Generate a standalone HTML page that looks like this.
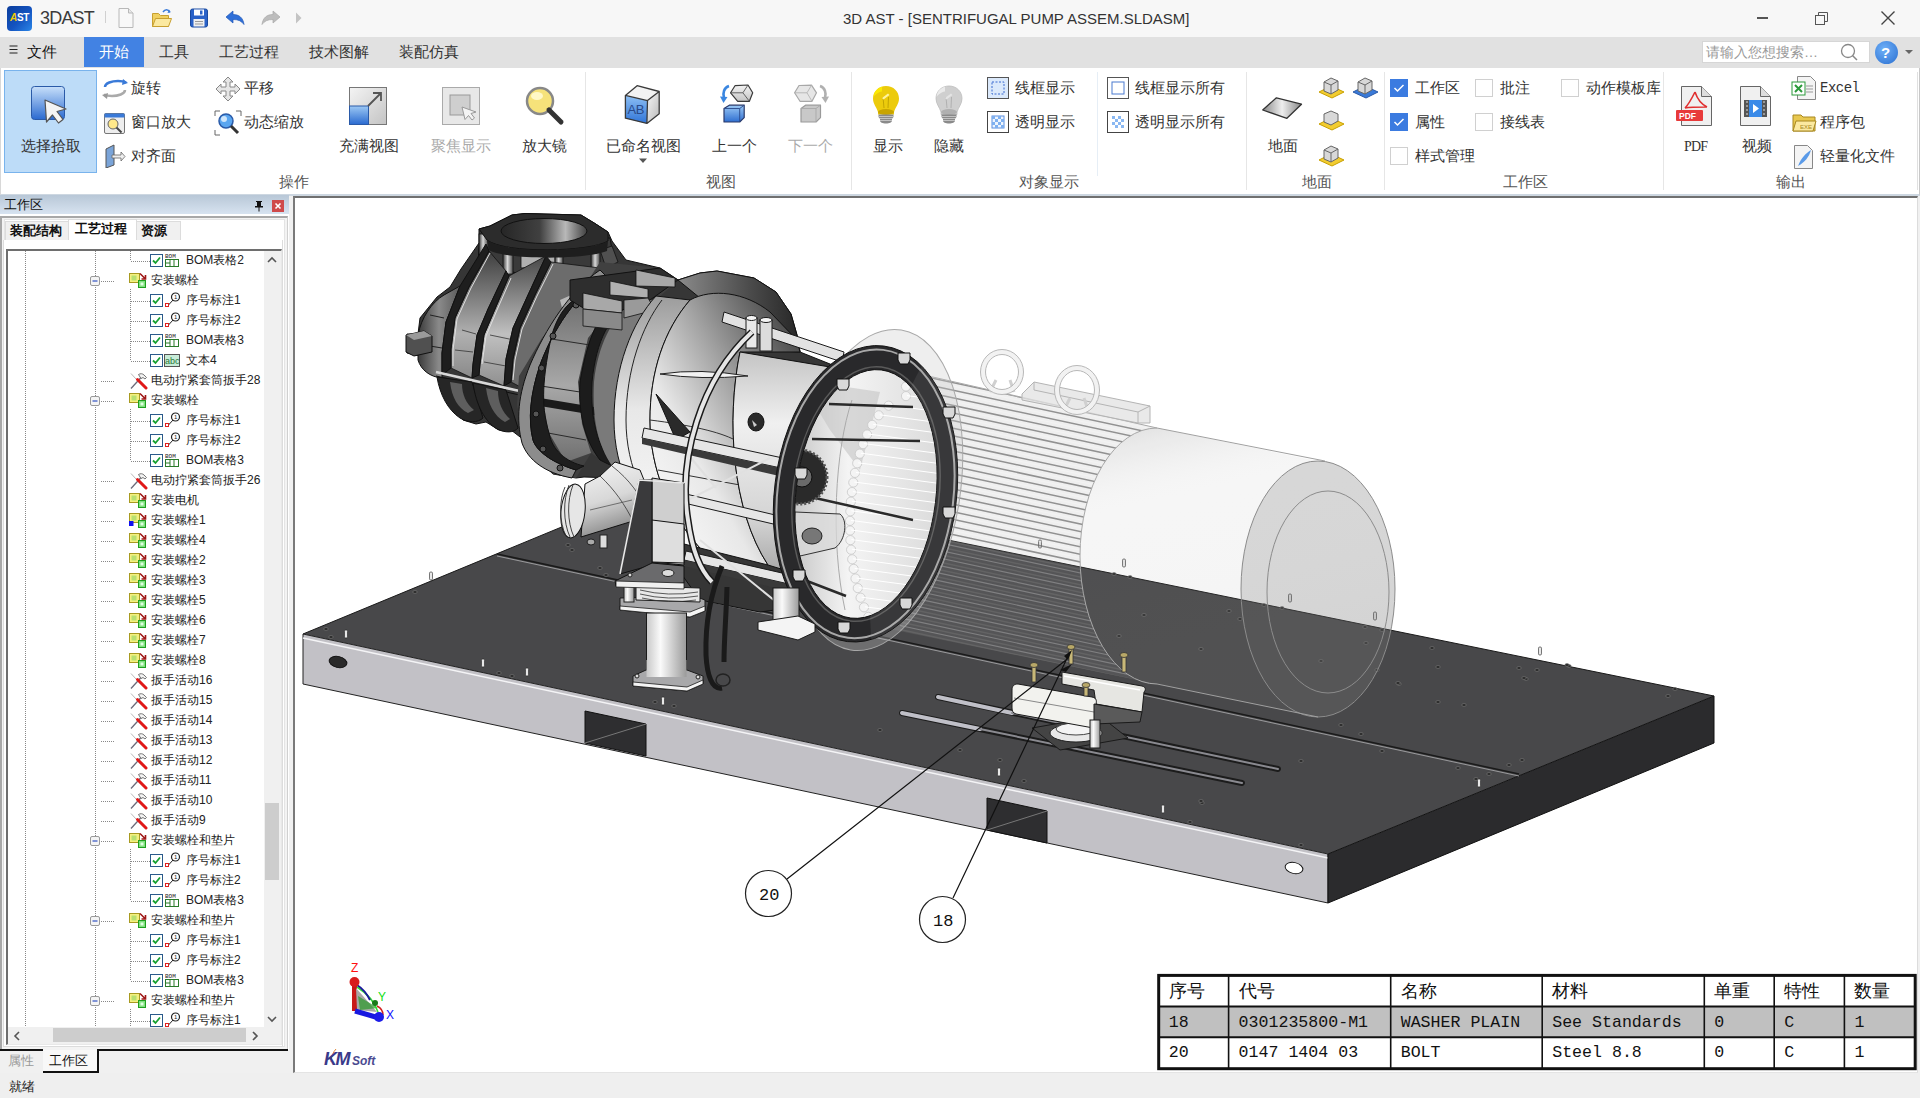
<!DOCTYPE html>
<html><head><meta charset="utf-8">
<style>
*{box-sizing:border-box;margin:0;padding:0}
html,body{width:1920px;height:1098px;overflow:hidden;background:#f0f0f0;font-family:"Liberation Sans",sans-serif;color:#222}
.a{position:absolute;white-space:nowrap}
#title{left:0;top:0;width:1920px;height:37px;background:#f7f7f7}
#menu{left:0;top:37px;width:1920px;height:31px;background:#e1e1e1}
#ribbon{left:0;top:68px;width:1920px;height:128px;background:#fff;border-left:1px solid #d8d8d8;border-right:1px solid #c8c8c8;border-bottom:2px solid #cdd7e1}
.mt{font-size:15px;color:#333;top:43px;line-height:18px}
.rt{font-size:14.5px;color:#333;line-height:16px}
.gl{font-size:14.5px;color:#555;line-height:16px;top:174px}
.sep{width:1px;background:#e6e6e6;top:72px;height:118px}
.gray{color:#aaa}
#panel{left:0;top:195px;width:289px;height:878px;background:#fff}
#status{left:0;top:1073px;width:1920px;height:25px;background:#efefef}
#vp{left:293px;top:196px;width:1625px;height:877px;background:#fff;border-left:2px solid #7a7a7a;border-top:2px solid #707070;border-right:1px solid #dcdcdc;border-bottom:1px solid #e4e4e4}
.tr{font-size:12px;line-height:14px;color:#222}
</style></head>
<body>
<!-- TITLE BAR -->
<div id="title" class="a">
<div class="a" style="left:7px;top:6px;width:25px;height:25px;border-radius:4px;background:linear-gradient(135deg,#0b3d9c 0%,#1454c0 55%,#2a86e8 100%)"></div>
<span class="a" style="left:10px;top:12px;font-size:10px;font-weight:bold;color:#f5d000;letter-spacing:-0.5px;font-style:italic">A</span><span class="a" style="left:17px;top:12px;font-size:10px;font-weight:bold;color:#fff;letter-spacing:-0.5px">ST</span>
<span class="a" style="left:40px;top:7px;font-size:18px;line-height:22px;color:#3a3a3a;letter-spacing:-0.8px">3DAST</span>
<div class="a" style="left:105px;top:11px;width:1px;height:12px;background:#d0d0d0"></div>
<svg class="a" style="left:114px;top:6px" width="24" height="24" viewBox="0 0 24 24"><path d="M5 2.5h9.5l4.5 4.5v14.5h-14z" fill="#f8f8f8" stroke="#b8b8b8"/><path d="M14.5 2.5v4.5h4.5" fill="#e8e8e8" stroke="#b8b8b8"/></svg>
<svg class="a" style="left:150px;top:6px" width="24" height="24" viewBox="0 0 24 24"><path d="M2.5 7.5h6l2 2h8v11h-16z" fill="#f0d060" stroke="#c8a030"/><path d="M2.5 20.5l3-8h16l-3 8z" fill="#fbe9a0" stroke="#c8a030"/><path d="M13 6c2-3 5-3 7 0" fill="none" stroke="#3a7ad8" stroke-width="1.5"/><path d="M19 3.5l1.5 3-3 .5z" fill="#3a7ad8"/></svg>
<svg class="a" style="left:187px;top:6px" width="24" height="24" viewBox="0 0 24 24"><rect x="3.5" y="3" width="17" height="18" rx="2" fill="#2a62c8" stroke="#1a4aa0"/><rect x="7" y="3.5" width="10" height="6" fill="#fff"/><rect x="13" y="4.5" width="2.5" height="4" fill="#2a62c8"/><rect x="6.5" y="13" width="11" height="7.5" fill="#f0f0f0"/><path d="M8 15.5h8M8 18h8" stroke="#999"/></svg>
<svg class="a" style="left:223px;top:6px" width="24" height="24" viewBox="0 0 24 24"><path d="M3 11l7-6v3.5c6 0 10 3 11 10-2.5-3.5-5.5-5-11-5v3.5z" fill="#2f6fd8" stroke="#1f58b8" stroke-width="0.7"/></svg>
<svg class="a" style="left:259px;top:6px" width="24" height="24" viewBox="0 0 24 24"><path d="M21 11l-7-6v3.5c-6 0-10 3-11 10 2.5-3.5 5.5-5 11-5v3.5z" fill="#bdbdbd" stroke="#a8a8a8" stroke-width="0.7"/></svg>
<svg class="a" style="left:293px;top:10px" width="12" height="16" viewBox="0 0 12 16"><path d="M3 2.5l5.5 5.5-5.5 5.5z" fill="#c4c4c4"/></svg>
<span class="a" style="left:843px;top:10px;font-size:15px;line-height:18px;color:#333">3D AST - [SENTRIFUGAL PUMP ASSEM.SLDASM]</span>
<div class="a" style="left:1757px;top:17px;width:11px;height:1.5px;background:#555"></div>
<svg class="a" style="left:1813px;top:9px" width="18" height="18" viewBox="0 0 18 18"><rect x="2.5" y="6.5" width="9" height="9" fill="none" stroke="#555"/><path d="M5.5 6.5v-3h9v9h-3" fill="none" stroke="#555"/></svg>
<svg class="a" style="left:1879px;top:9px" width="18" height="18" viewBox="0 0 18 18"><path d="M2.5 2.5l13 13M15.5 2.5l-13 13" stroke="#444" stroke-width="1.4"/></svg>
</div>
<!-- MENU -->
<div id="menu" class="a">
<svg class="a" style="left:9px;top:8px" width="10" height="10" viewBox="0 0 10 10"><path d="M0.5 1h8M0.5 4.5h8M0.5 8h8" stroke="#222" stroke-width="1.1"/></svg>
<span class="a mt" style="left:27px;top:6px;color:#111">文件</span>
<div class="a" style="left:84px;top:0;width:60px;height:30px;background:#4282e3"></div>
<span class="a mt" style="left:99px;top:6px;color:#fff">开始</span>
<span class="a mt" style="left:159px;top:6px">工具</span>
<span class="a mt" style="left:219px;top:6px">工艺过程</span>
<span class="a mt" style="left:309px;top:6px">技术图解</span>
<span class="a mt" style="left:399px;top:6px">装配仿真</span>
<div class="a" style="left:1702px;top:4px;width:168px;height:22px;background:#fff;border:1px solid #d6d6d6"></div>
<span class="a" style="left:1706px;top:7px;font-size:14px;line-height:16px;color:#999">请输入您想搜索…</span>
<svg class="a" style="left:1838px;top:5px" width="22" height="20" viewBox="0 0 22 20"><circle cx="10" cy="9" r="6.5" fill="none" stroke="#888" stroke-width="1.3"/><path d="M14.5 13.5l4.5 4.5" stroke="#888" stroke-width="1.5"/></svg>
<div class="a" style="left:1875px;top:4px;width:23px;height:23px;border-radius:50%;background:radial-gradient(circle at 40% 35%,#6fb0f8,#2a6fd0)"></div>
<span class="a" style="left:1881px;top:7px;font-size:15px;line-height:17px;color:#fff;font-weight:bold">?</span>
<svg class="a" style="left:1904px;top:11px" width="10" height="8" viewBox="0 0 10 8"><path d="M1 2h8l-4 4z" fill="#666"/></svg>
</div>
<!-- RIBBON -->
<div id="ribbon" class="a">
<!-- group 操作 -->
<div class="a" style="left:3px;top:2px;width:93px;height:103px;background:#bddcf8;border:1px solid #79b3ec"></div>
<svg class="a" style="left:28px;top:16px" width="44" height="44" viewBox="0 0 44 44"><defs><linearGradient id="gs" x1="0" y1="0" x2="0" y2="1"><stop offset="0" stop-color="#c8e0fa"/><stop offset="1" stop-color="#2a6ad0"/></linearGradient></defs><rect x="2.5" y="2.5" width="33" height="33" rx="3" fill="url(#gs)" stroke="#2a5aa8"/><path d="M16 16l21 9-9 2.5 6 8-4.5 3.5-6-8-6 7z" fill="#f4f4f4" stroke="#555" stroke-width="1.2" stroke-linejoin="round"/></svg>
<span class="a rt" style="left:20px;top:70px">选择拾取</span>
<svg class="a" style="left:100px;top:10px" width="28" height="22" viewBox="0 0 28 22"><path d="M4 9c0-4 7-6 13-6 3 0 6 .5 8 1.5" fill="none" stroke="#3a7ad8" stroke-width="2.5"/><path d="M24 12c0 4-7 6-13 6-3 0-6-.5-8-1.5" fill="none" stroke="#aaa" stroke-width="2.5"/><path d="M22 1l5 4-6 2z" fill="#3a7ad8"/><path d="M6 21l-5-4 6-2z" fill="#999"/></svg>
<span class="a rt" style="left:130px;top:12px">旋转</span>
<svg class="a" style="left:102px;top:44px" width="24" height="24" viewBox="0 0 24 24"><rect x="1.5" y="1.5" width="20" height="20" rx="1.5" fill="#eee" stroke="#777"/><rect x="1.5" y="1.5" width="20" height="4" fill="#3a7ad8"/><circle cx="10" cy="12" r="5" fill="#ffe88a" stroke="#666"/><path d="M13.5 15.5l5 5" stroke="#444" stroke-width="2"/></svg>
<span class="a rt" style="left:130px;top:46px">窗口放大</span>
<svg class="a" style="left:102px;top:76px" width="24" height="24" viewBox="0 0 24 24"><path d="M3 5l8-4v20l-8 3z" fill="#7aa4d8" stroke="#555"/><path d="M9 11h9v-3l4 4.5-4 4.5v-3h-9z" fill="#eee" stroke="#666" stroke-width="0.8"/></svg>
<span class="a rt" style="left:130px;top:80px">对齐面</span>
<svg class="a" style="left:213px;top:8px" width="28" height="26" viewBox="0 0 28 26"><path d="M14 1l5 5h-3v5h5v-3l5 5-5 5v-3h-5v5h3l-5 5-5-5h3v-5h-5v3l-5-5 5-5v3h5v-5h-3z" fill="#e6e6e6" stroke="#888"/></svg>
<span class="a rt" style="left:243px;top:12px">平移</span>
<svg class="a" style="left:213px;top:42px" width="28" height="26" viewBox="0 0 28 26"><path d="M1 6v-5h5M22 1h5v5M1 20v5h5" fill="none" stroke="#666"/><circle cx="12" cy="11" r="7" fill="#5aa6f0" stroke="#2a5aa8" stroke-width="1.5"/><circle cx="10" cy="9" r="3" fill="#cfe6fb"/><path d="M17 16l7 7" stroke="#333" stroke-width="3"/></svg>
<span class="a rt" style="left:243px;top:46px">动态缩放</span>
<svg class="a" style="left:346px;top:17px" width="42" height="42" viewBox="0 0 42 42"><defs><linearGradient id="gf" x1="0" y1="0" x2="1" y2="1"><stop offset="0" stop-color="#f4f4f4"/><stop offset="1" stop-color="#c4c4c4"/></linearGradient><linearGradient id="gb" x1="0" y1="0" x2="0" y2="1"><stop offset="0" stop-color="#9cc8f4"/><stop offset="1" stop-color="#2a6ad0"/></linearGradient></defs><rect x="2.5" y="2.5" width="37" height="37" fill="url(#gf)" stroke="#777"/><rect x="2.5" y="21" width="19" height="18.5" fill="url(#gb)" stroke="#2a5aa8"/><path d="M21 21l13-13M26 8h8v8" fill="none" stroke="#555" stroke-width="1.8"/></svg>
<span class="a rt" style="left:338px;top:70px">充满视图</span>
<svg class="a" style="left:439px;top:17px" width="42" height="42" viewBox="0 0 42 42"><rect x="2.5" y="2.5" width="37" height="37" fill="#e8e8e8" stroke="#aaa"/><rect x="10" y="10" width="20" height="20" fill="#cfcfcf" stroke="#999"/><path d="M22 22l14 5-5 1.5 3.5 4.5-2.5 2-3.5-4.5-3.5 4z" fill="#f4f4f4" stroke="#999"/></svg>
<span class="a rt gray" style="left:430px;top:70px">聚焦显示</span>
<svg class="a" style="left:522px;top:16px" width="44" height="44" viewBox="0 0 44 44"><circle cx="17" cy="17" r="13" fill="#f6e27a" stroke="#888" stroke-width="2.5"/><ellipse cx="14" cy="12" rx="6" ry="4" fill="#fff8c8"/><path d="M26 26l12 12" stroke="#333" stroke-width="5" stroke-linecap="round"/></svg>
<span class="a rt" style="left:521px;top:70px">放大镜</span>
<span class="a gl" style="left:278px;top:106px">操作</span>
<div class="a sep" style="left:584px;top:4px"></div>
<!-- group 视图 -->
<svg class="a" style="left:622px;top:14px" width="42" height="46" viewBox="0 0 42 46"><defs><linearGradient id="cbF" x1="0" y1="0" x2="0" y2="1"><stop offset="0" stop-color="#8ec0f4"/><stop offset="1" stop-color="#2f74d8"/></linearGradient><linearGradient id="cbR" x1="0" y1="0" x2="1" y2="1"><stop offset="0" stop-color="#f8f8f8"/><stop offset="1" stop-color="#b8b8b8"/></linearGradient></defs><path d="M2.4 13.4L24.5 18.6L23.9 41.4L2.4 36.2Z" fill="url(#cbF)"/><path d="M2.4 13.4L14.1 3.7L36.2 9.5L24.5 18.6Z" fill="#f2f2f2"/><path d="M24.5 18.6L36.2 9.5L36.2 31.7L23.9 41.4Z" fill="url(#cbR)"/><path d="M2.4 13.4L14.1 3.7L36.2 9.5L36.2 31.7L23.9 41.4L2.4 36.2Z M2.4 13.4L24.5 18.6L36.2 9.5M24.5 18.6L23.9 41.4" fill="none" stroke="#3a3a3a" stroke-width="1.3" stroke-linejoin="round"/><text x="4.5" y="32" font-size="13" fill="#2a4a8a" font-family="Liberation Sans" letter-spacing="-0.5">AB</text></svg>
<span class="a rt" style="left:605px;top:70px">已命名视图</span>
<svg class="a" style="left:637px;top:90px" width="10" height="6" viewBox="0 0 10 6"><path d="M1 0.5h8l-4 4.5z" fill="#555"/></svg>
<svg class="a" style="left:716px;top:14px" width="40" height="46" viewBox="0 0 40 46"><defs><linearGradient id="pvB" x1="0" y1="0" x2="0" y2="1"><stop offset="0" stop-color="#9ccaf6"/><stop offset="1" stop-color="#2f6ed0"/></linearGradient><linearGradient id="pvG" x1="0" y1="0" x2="0" y2="1"><stop offset="0" stop-color="#f4f4f4"/><stop offset="1" stop-color="#c4c4c4"/></linearGradient></defs><path d="M13.6 10.8L18 3.7L31 3L35.7 10.8L32.4 19.3L20.7 19.3Z" fill="url(#pvG)" stroke="#3a3a3a" stroke-width="1.2" stroke-linejoin="round"/><path d="M13.6 10.8L25.9 10.8L31 3M25.9 10.8L32.4 19.3" fill="none" stroke="#555" stroke-width="0.9"/><path d="M7 26.5L12.3 23.2L27.2 23.2L27.2 35.6L22.7 40L7 40Z" fill="url(#pvB)" stroke="#2a3a6a" stroke-width="1.2" stroke-linejoin="round"/><path d="M7 26.5L22.7 26.5L27.2 23.2M22.7 26.5L22.7 40" fill="none" stroke="#2a4a8a" stroke-width="0.9"/><path d="M12 4C7 5.5 5.5 11 7 16" fill="none" stroke="#3a86e0" stroke-width="2.6"/><path d="M3 14.5L10.5 15L6.5 21Z" fill="#3a86e0"/></svg>
<span class="a rt" style="left:711px;top:70px">上一个</span>
<svg class="a" style="left:792px;top:14px" width="40" height="46" viewBox="0 0 40 46"><path d="M1.6 10.8L6 3.5L18.5 3.2L23.5 10.8L19 19.3L7 19.3Z" fill="#e6e6e6" stroke="#a8a8a8" stroke-width="1.2" stroke-linejoin="round"/><path d="M1.6 10.8L14 10.8L18.5 3.2M14 10.8L19 19.3" fill="none" stroke="#b4b4b4" stroke-width="0.9"/><path d="M8 26.5L12.5 23.2L27.5 23.2L27.5 35.6L23 40L8 40Z" fill="#c8c8c8" stroke="#9a9a9a" stroke-width="1.2" stroke-linejoin="round"/><path d="M8 26.5L23 26.5L27.5 23.2M23 26.5L23 40" fill="none" stroke="#a8a8a8" stroke-width="0.9"/><path d="M27 4C32 5.5 33.5 11 32 16" fill="none" stroke="#b0b0b0" stroke-width="2.6"/><path d="M36 14.5L28.5 15L32.5 21Z" fill="#b0b0b0"/></svg>
<span class="a rt gray" style="left:787px;top:70px">下一个</span>
<span class="a gl" style="left:705px;top:106px">视图</span>
<div class="a sep" style="left:850px;top:4px"></div>
<!-- group 对象显示 -->
<svg class="a" style="left:868px;top:14px" width="34" height="46" viewBox="0 0 34 46"><path d="M17 4C24.5 4 30 9.5 30 16.5C30 22 26.5 25 25 30L25 32.5L9 32.5L9 30C7.5 25 4 22 4 16.5C4 9.5 9.5 4 17 4Z" fill="#eccb0c"/><path d="M17 4C11 4 5 8 4.5 15C6 13 9 10 13 9.5L13 4.8C14.5 4.2 15.8 4 17 4Z" fill="#fff000" fill-opacity="0.8"/><path d="M15 26L14 15M19 26L19.5 15" stroke="#b89a00" stroke-width="0.8"/><path d="M13 16L19 11.5L20.5 13L14.5 17.5Z" fill="#fff3a0"/><ellipse cx="17" cy="30" rx="8" ry="3" fill="#c8a400"/><path d="M9.5 32.5h15v2c0 1-1 1.5-1.5 2v2c0 2-2.5 3-6 3s-6-1-6-3v-2c-0.5-.5-1.5-1-1.5-2z" fill="#8a8a8a"/><path d="M10 34.5h14M10.5 36.5h13M11 38.5h12" stroke="#c8c8c8" stroke-width="0.9"/></svg>
<span class="a rt" style="left:872px;top:70px">显示</span>
<svg class="a" style="left:931px;top:14px" width="34" height="46" viewBox="0 0 34 46"><path d="M17 4C24.5 4 30 9.5 30 16.5C30 22 26.5 25 25 30L25 32.5L9 32.5L9 30C7.5 25 4 22 4 16.5C4 9.5 9.5 4 17 4Z" fill="#cfcfcf" stroke="#bdbdbd" stroke-width="0.8"/><path d="M17 4C11 4 5 8 4.5 15C6 13 9 10 13 9.5L13 4.8C14.5 4.2 15.8 4 17 4Z" fill="#f0f0f0" fill-opacity="0.8"/><path d="M15 26L14 15M19 26L19.5 15" stroke="#a8a8a8" stroke-width="0.8"/><path d="M13 16L19 11.5L20.5 13L14.5 17.5Z" fill="#e4e4e4"/><ellipse cx="17" cy="30" rx="8" ry="3" fill="#b0b0b0"/><path d="M9.5 32.5h15v2c0 1-1 1.5-1.5 2v2c0 2-2.5 3-6 3s-6-1-6-3v-2c-0.5-.5-1.5-1-1.5-2z" fill="#8a8a8a"/><path d="M10 34.5h14M10.5 36.5h13M11 38.5h12" stroke="#c8c8c8" stroke-width="0.9"/></svg>
<span class="a rt" style="left:933px;top:70px">隐藏</span>
<svg class="a" style="left:985px;top:8px" width="24" height="24" viewBox="0 0 24 24"><rect x="1.5" y="1.5" width="21" height="21" fill="#dbe9fb" stroke="#555"/><rect x="6" y="6" width="12" height="12" fill="none" stroke="#3a6ad0" stroke-dasharray="2 1.5"/></svg>
<span class="a rt" style="left:1014px;top:12px">线框显示</span>
<svg class="a" style="left:985px;top:42px" width="24" height="24" viewBox="0 0 24 24"><rect x="1.5" y="1.5" width="21" height="21" fill="#fff" stroke="#444"/><rect x="6" y="6" width="12" height="12" fill="#eef5fe" stroke="#5a8ee0"/><path d="M6 6h3v3h-3zM12 6h3v3h-3zM9 9h3v3h-3zM15 9h3v3h-3zM6 12h3v3h-3zM12 12h3v3h-3zM9 15h3v3h-3zM15 15h3v3h-3z" fill="#7eb0f0"/></svg>
<span class="a rt" style="left:1014px;top:46px">透明显示</span>
<div class="a sep" style="left:1096px;top:4px;height:104px;background:#e6eef6"></div>
<svg class="a" style="left:1105px;top:8px" width="24" height="24" viewBox="0 0 24 24"><rect x="1.5" y="1.5" width="21" height="21" fill="#fff" stroke="#555"/><rect x="6" y="6" width="12" height="12" fill="none" stroke="#4a7ad0"/></svg>
<span class="a rt" style="left:1134px;top:12px">线框显示所有</span>
<svg class="a" style="left:1105px;top:42px" width="24" height="24" viewBox="0 0 24 24"><rect x="1.5" y="1.5" width="21" height="21" fill="#fff" stroke="#444"/><path d="M6 6h3v3h-3zM12 6h3v3h-3zM9 9h3v3h-3zM15 9h3v3h-3zM6 12h3v3h-3zM12 12h3v3h-3zM9 15h3v3h-3zM15 15h3v3h-3z" fill="#8ab8f2"/></svg>
<span class="a rt" style="left:1134px;top:46px">透明显示所有</span>
<span class="a gl" style="left:1018px;top:106px">对象显示</span>
<div class="a sep" style="left:1245px;top:4px"></div>
<!-- group 地面 -->
<svg class="a" style="left:1260px;top:26px" width="44" height="26" viewBox="0 0 44 26"><defs><linearGradient id="gp" x1="0" y1="0" x2="1" y2="0"><stop offset="0" stop-color="#888"/><stop offset="0.5" stop-color="#eee"/><stop offset="1" stop-color="#888"/></linearGradient></defs><path d="M1.7 16L15.4 3.8L40.5 10.2L25.9 24.3Z" fill="url(#gp)" stroke="#333" stroke-width="1.3" stroke-linejoin="round"/></svg>
<span class="a rt" style="left:1267px;top:70px">地面</span>
<svg class="a" style="left:1316px;top:8px" width="28" height="24" viewBox="0 0 28 24"><path d="M2 16l12-6 13 6-12 6z" fill="#f2cc30" stroke="#c8a000"/><path d="M7 6l7-4 7 3v9l-7 4-7-3z" fill="#d8d8d8" stroke="#666"/><path d="M7 6l7 3 7-4M14 9v9" fill="none" stroke="#666"/></svg>
<svg class="a" style="left:1350px;top:8px" width="28" height="24" viewBox="0 0 28 24"><path d="M2 16l12-6 13 6-12 6z" fill="#3a7ad8" stroke="#2a5aa8"/><path d="M7 6l7-4 7 3v9l-7 4-7-3z" fill="#d8d8d8" stroke="#666"/><path d="M7 6l7 3 7-4M14 9v9" fill="none" stroke="#666"/></svg>
<svg class="a" style="left:1316px;top:42px" width="28" height="24" viewBox="0 0 28 24"><path d="M2 14l12-6 13 6-12 6z" fill="#f2cc30" stroke="#c8a000"/><path d="M7 4l7-3 7 3v7l-7 4-7-3z" fill="#d8d8d8" stroke="#666"/></svg>
<svg class="a" style="left:1316px;top:76px" width="28" height="24" viewBox="0 0 28 24"><path d="M2 16l12-6 13 6-12 6z" fill="#f2cc30" stroke="#c8a000"/><path d="M7 6l7-4 7 3v9l-7 4-7-3z" fill="#d8d8d8" stroke="#666"/><path d="M7 6l7 3 7-4M14 9v9" fill="none" stroke="#666"/></svg>
<span class="a gl" style="left:1301px;top:106px">地面</span>
<div class="a sep" style="left:1383px;top:4px"></div>
<!-- group 工作区 -->
<div class="a" style="left:1389px;top:11px;width:18px;height:18px;background:#3b7be0"></div><svg class="a" style="left:1389px;top:11px" width="18" height="18" viewBox="0 0 18 18"><path d="M4.5 9l3 3 6-6" fill="none" stroke="#fff" stroke-width="1.5"/></svg>
<span class="a rt" style="left:1414px;top:12px">工作区</span>
<div class="a" style="left:1474px;top:11px;width:18px;height:18px;border:1px solid #d0d0d0;background:#fff"></div>
<span class="a rt" style="left:1499px;top:12px">批注</span>
<div class="a" style="left:1560px;top:11px;width:18px;height:18px;border:1px solid #d0d0d0;background:#fff"></div>
<span class="a rt" style="left:1585px;top:12px">动作模板库</span>
<div class="a" style="left:1389px;top:45px;width:18px;height:18px;background:#3b7be0"></div><svg class="a" style="left:1389px;top:45px" width="18" height="18" viewBox="0 0 18 18"><path d="M4.5 9l3 3 6-6" fill="none" stroke="#fff" stroke-width="1.5"/></svg>
<span class="a rt" style="left:1414px;top:46px">属性</span>
<div class="a" style="left:1474px;top:45px;width:18px;height:18px;border:1px solid #d0d0d0;background:#fff"></div>
<span class="a rt" style="left:1499px;top:46px">接线表</span>
<div class="a" style="left:1389px;top:79px;width:18px;height:18px;border:1px solid #d0d0d0;background:#fff"></div>
<span class="a rt" style="left:1414px;top:80px">样式管理</span>
<span class="a gl" style="left:1502px;top:106px">工作区</span>
<div class="a sep" style="left:1662px;top:4px"></div>
<!-- group 输出 -->
<svg class="a" style="left:1674px;top:16px" width="40" height="44" viewBox="0 0 40 44"><path d="M6.5 2.5h20l10 10v29h-30z" fill="#f0f0f0" stroke="#666"/><path d="M26.5 2.5v10h10" fill="#ddd" stroke="#666"/><path d="M20 8c-3 6-6 12-10 16M20 8c2 6 6 12 12 15M10 24c5-1 15-1 22-1" fill="none" stroke="#e03030" stroke-width="1.6"/><rect x="1" y="26" width="27" height="11" rx="1" fill="#e83a3a"/><text x="4" y="35" font-size="8.5" fill="#fff" font-family="Liberation Sans" font-weight="bold">PDF</text></svg>
<span class="a" style="left:1683px;top:71px;font-family:'Liberation Serif',serif;font-size:14px;line-height:16px;color:#333;letter-spacing:-0.8px">PDF</span>
<svg class="a" style="left:1736px;top:16px" width="40" height="44" viewBox="0 0 40 44"><path d="M3.5 2.5h20l10 10v29h-30z" fill="#f0f0f0" stroke="#666"/><path d="M23.5 2.5v10h10" fill="#ddd" stroke="#666"/><rect x="7" y="16" width="23" height="17" fill="#555"/><path d="M9 18h2M9 22h2M9 26h2M9 30h2M26 18h2M26 22h2M26 26h2M26 30h2" stroke="#ddd"/><rect x="12" y="16" width="13" height="17" fill="#3a8ae8"/><path d="M16 20l6 4.5-6 4.5z" fill="#fff"/></svg>
<span class="a rt" style="left:1741px;top:70px">视频</span>
<svg class="a" style="left:1790px;top:7px" width="26" height="26" viewBox="0 0 26 26"><path d="M6.5 1.5h13l5 5v18h-18z" fill="#f4f4f4" stroke="#888"/><rect x="1" y="7" width="13" height="13" fill="#fff" stroke="#2a9a3a"/><path d="M4 10l7 7M11 10l-7 7" stroke="#2a9a3a" stroke-width="2"/><path d="M15 11h7M15 14h7M15 17h7" stroke="#999"/></svg>
<span class="a" style="left:1819px;top:12px;font-family:'Liberation Mono',monospace;font-size:14px;line-height:16px;color:#333;letter-spacing:-0.5px">Excel</span>
<svg class="a" style="left:1790px;top:42px" width="26" height="24" viewBox="0 0 26 24"><path d="M2 5h8l2 2h12v14h-22z" fill="#e8c850" stroke="#a88820"/><path d="M2 21l3-10h20l-3 10z" fill="#fbe9a0" stroke="#a88820"/><text x="9" y="19" font-size="6" fill="#a88820" font-family="Liberation Sans">EXE</text></svg>
<span class="a rt" style="left:1819px;top:46px">程序包</span>
<svg class="a" style="left:1790px;top:76px" width="26" height="26" viewBox="0 0 26 26"><path d="M3.5 1.5h13l5 5v18h-18z" fill="#f4f4f4" stroke="#888"/><path d="M7 22c3-8 8-13 13-16-2 7-6 12-13 16z" fill="#5a9ae8"/></svg>
<span class="a rt" style="left:1819px;top:80px">轻量化文件</span>
<span class="a gl" style="left:1775px;top:106px">输出</span>
<div class="a" style="left:1916px;top:4px;width:1px;height:118px;background:#e0e0e0"></div>
</div>
<!-- PANEL -->
<div id="panel" class="a">
<div class="a" style="left:0;top:0;width:289px;height:19px;background:linear-gradient(#b8c7d7,#d7e3f0)"></div>
<span class="a" style="left:4px;top:2px;font-size:13px;line-height:15px;color:#111">工作区</span>
<svg class="a" style="left:253px;top:5px" width="12" height="12" viewBox="0 0 12 12"><path d="M3 1h6v1h-1v4h2v1.5h-3.5v4h-1v-4h-3.5v-1.5h2v-4h-1z" fill="#111"/></svg>
<div class="a" style="left:272px;top:5px;width:12px;height:12px;background:#cf4a4a"></div>
<svg class="a" style="left:272px;top:5px" width="12" height="12" viewBox="0 0 12 12"><path d="M3.5 3.5l5 5M8.5 3.5l-5 5" stroke="#fff" stroke-width="1.6"/></svg>
<div class="a" style="left:0;top:21px;width:288px;height:834px;border-left:2px solid #a8a8a8;border-top:2px solid #a8a8a8;border-right:1px solid #d0d0d0;background:#f3f3f3"></div>
<div class="a" style="left:4px;top:24px;width:281px;height:828px;background:#fff;border:1px solid #e4e4e4"></div>
<div class="a" style="left:5px;top:26px;width:64px;height:19px;background:#f0f0f0;border:1px solid #dcdcdc;border-bottom:none"></div>
<span class="a" style="left:10px;top:28px;font-size:13px;line-height:15px;font-weight:bold;color:#111">装配结构</span>
<div class="a" style="left:68px;top:24px;width:69px;height:22px;background:#fff;border:1px solid #dcdcdc;border-bottom:none"></div>
<span class="a" style="left:75px;top:26px;font-size:13px;line-height:15px;font-weight:bold;color:#111">工艺过程</span>
<div class="a" style="left:136px;top:26px;width:45px;height:19px;background:#f0f0f0;border:1px solid #dcdcdc;border-bottom:none"></div>
<span class="a" style="left:141px;top:28px;font-size:13px;line-height:15px;font-weight:bold;color:#111">资源</span>
<div class="a" style="left:3px;top:45px;width:280px;height:807px;border:1px solid #dcdcdc;border-top:none;background:#fff"></div>
<div class="a" style="left:6px;top:54px;width:276px;height:796px;border-left:2px solid #6e6e6e;border-top:2px solid #6e6e6e;border-right:1px solid #e8e8e8;border-bottom:1px solid #e8e8e8;background:#fff;overflow:hidden">
<div class="a" style="left:17px;top:0px;width:1px;height:779px;background-image:linear-gradient(#888 50%,transparent 50%);background-size:1px 2px"></div>
<div class="a" style="left:87px;top:0px;width:1px;height:779px;background-image:linear-gradient(#888 50%,transparent 50%);background-size:1px 2px"></div>
<div class="a" style="left:123px;top:10px;width:20px;height:1px;background-image:linear-gradient(90deg,#888 50%,transparent 50%);background-size:2px 1px"></div>
<svg class="a" style="left:142px;top:3px" width="14" height="14" viewBox="0 0 14 14"><rect x="0.5" y="0.5" width="12" height="12" fill="#fff" stroke="#2a5a8a"/><path d="M3 6.5l2.5 2.5 4.5-5.5" fill="none" stroke="#18a030" stroke-width="1.8"/></svg>
<svg class="a" style="left:156px;top:1px" width="16" height="16" viewBox="0 0 16 16"><text x="1" y="5.5" font-size="6" font-family="Liberation Mono" fill="#222">BOM</text><rect x="1.5" y="7.5" width="13" height="7" fill="#fff" stroke="#2a7a2a"/><path d="M6 7.5v7M10 7.5v7M1.5 11h4.5" stroke="#2a7a2a"/></svg>
<span class="a tr" style="left:178px;top:2px">BOM表格2</span>
<div class="a" style="left:93px;top:30px;width:14px;height:1px;background-image:linear-gradient(90deg,#888 50%,transparent 50%);background-size:2px 1px"></div>
<svg class="a" style="left:121px;top:21px" width="18" height="16" viewBox="0 0 18 16"><rect x="0.5" y="1.5" width="10" height="9" fill="#f4f080" stroke="#a89a20"/><rect x="2.5" y="3.5" width="5" height="5" fill="#b8e070"/><rect x="9.5" y="8.5" width="7" height="7" fill="#80e080" stroke="#20a020"/><rect x="11.5" y="10.5" width="3" height="3" fill="#e0ffe0"/><path d="M11 1.5l5 5M16.5 3v4h-4" fill="none" stroke="#a01818" stroke-width="1.6"/></svg>
<svg class="a" style="left:82px;top:25px" width="11" height="11" viewBox="0 0 11 11"><rect x="0.5" y="0.5" width="9" height="9" rx="1.5" fill="#f4f4f4" stroke="#999"/><path d="M2.5 5h5" stroke="#3050c0" stroke-width="1.2"/></svg>
<span class="a tr" style="left:143px;top:22px">安装螺栓</span>
<div class="a" style="left:123px;top:50px;width:20px;height:1px;background-image:linear-gradient(90deg,#888 50%,transparent 50%);background-size:2px 1px"></div>
<svg class="a" style="left:142px;top:43px" width="14" height="14" viewBox="0 0 14 14"><rect x="0.5" y="0.5" width="12" height="12" fill="#fff" stroke="#2a5a8a"/><path d="M3 6.5l2.5 2.5 4.5-5.5" fill="none" stroke="#18a030" stroke-width="1.8"/></svg>
<svg class="a" style="left:156px;top:41px" width="18" height="16" viewBox="0 0 18 16"><circle cx="11.5" cy="5" r="4" fill="#fff" stroke="#222" stroke-width="1.2"/><text x="10" y="7.3" font-size="6" font-family="Liberation Sans" fill="#222">1</text><path d="M9 8l-4.5 5" stroke="#222"/><rect x="1.5" y="11.5" width="3" height="3" fill="#fff" stroke="#e02020"/></svg>
<span class="a tr" style="left:178px;top:42px">序号标注1</span>
<div class="a" style="left:123px;top:70px;width:20px;height:1px;background-image:linear-gradient(90deg,#888 50%,transparent 50%);background-size:2px 1px"></div>
<svg class="a" style="left:142px;top:63px" width="14" height="14" viewBox="0 0 14 14"><rect x="0.5" y="0.5" width="12" height="12" fill="#fff" stroke="#2a5a8a"/><path d="M3 6.5l2.5 2.5 4.5-5.5" fill="none" stroke="#18a030" stroke-width="1.8"/></svg>
<svg class="a" style="left:156px;top:61px" width="18" height="16" viewBox="0 0 18 16"><circle cx="11.5" cy="5" r="4" fill="#fff" stroke="#222" stroke-width="1.2"/><text x="10" y="7.3" font-size="6" font-family="Liberation Sans" fill="#222">1</text><path d="M9 8l-4.5 5" stroke="#222"/><rect x="1.5" y="11.5" width="3" height="3" fill="#fff" stroke="#e02020"/></svg>
<span class="a tr" style="left:178px;top:62px">序号标注2</span>
<div class="a" style="left:123px;top:90px;width:20px;height:1px;background-image:linear-gradient(90deg,#888 50%,transparent 50%);background-size:2px 1px"></div>
<svg class="a" style="left:142px;top:83px" width="14" height="14" viewBox="0 0 14 14"><rect x="0.5" y="0.5" width="12" height="12" fill="#fff" stroke="#2a5a8a"/><path d="M3 6.5l2.5 2.5 4.5-5.5" fill="none" stroke="#18a030" stroke-width="1.8"/></svg>
<svg class="a" style="left:156px;top:81px" width="16" height="16" viewBox="0 0 16 16"><text x="1" y="5.5" font-size="6" font-family="Liberation Mono" fill="#222">BOM</text><rect x="1.5" y="7.5" width="13" height="7" fill="#fff" stroke="#2a7a2a"/><path d="M6 7.5v7M10 7.5v7M1.5 11h4.5" stroke="#2a7a2a"/></svg>
<span class="a tr" style="left:178px;top:82px">BOM表格3</span>
<div class="a" style="left:123px;top:110px;width:20px;height:1px;background-image:linear-gradient(90deg,#888 50%,transparent 50%);background-size:2px 1px"></div>
<svg class="a" style="left:142px;top:103px" width="14" height="14" viewBox="0 0 14 14"><rect x="0.5" y="0.5" width="12" height="12" fill="#fff" stroke="#2a5a8a"/><path d="M3 6.5l2.5 2.5 4.5-5.5" fill="none" stroke="#18a030" stroke-width="1.8"/></svg>
<svg class="a" style="left:156px;top:101px" width="16" height="16" viewBox="0 0 16 16"><rect x="0.5" y="2.5" width="15" height="12" fill="#c8ecd8" stroke="#555"/><text x="1" y="11.5" font-size="9" font-family="Liberation Sans" fill="#2a7a3a">abc</text></svg>
<span class="a tr" style="left:178px;top:102px">文本4</span>
<div class="a" style="left:93px;top:130px;width:14px;height:1px;background-image:linear-gradient(90deg,#888 50%,transparent 50%);background-size:2px 1px"></div>
<svg class="a" style="left:122px;top:121px" width="18" height="18" viewBox="0 0 18 18"><path d="M1 1.5L6 7" stroke="#b8b8b8" stroke-width="1"/><path d="M1 16.5L11.5 5" stroke="#6a6a7a" stroke-width="1.3"/><path d="M8.5 2.5c2-1.2 4-1 5.5 0.5l2.5 2.5-1.5 1.5-2-1.5-2 1z" fill="#f4f4f4" stroke="#666" stroke-width="0.9"/><path d="M7.5 7.5L16 16" stroke="#e01818" stroke-width="3" stroke-linecap="round"/></svg>
<span class="a tr" style="left:143px;top:122px">电动拧紧套筒扳手28</span>
<div class="a" style="left:93px;top:150px;width:14px;height:1px;background-image:linear-gradient(90deg,#888 50%,transparent 50%);background-size:2px 1px"></div>
<svg class="a" style="left:121px;top:141px" width="18" height="16" viewBox="0 0 18 16"><rect x="0.5" y="1.5" width="10" height="9" fill="#f4f080" stroke="#a89a20"/><rect x="2.5" y="3.5" width="5" height="5" fill="#b8e070"/><rect x="9.5" y="8.5" width="7" height="7" fill="#80e080" stroke="#20a020"/><rect x="11.5" y="10.5" width="3" height="3" fill="#e0ffe0"/><path d="M11 1.5l5 5M16.5 3v4h-4" fill="none" stroke="#a01818" stroke-width="1.6"/></svg>
<svg class="a" style="left:82px;top:145px" width="11" height="11" viewBox="0 0 11 11"><rect x="0.5" y="0.5" width="9" height="9" rx="1.5" fill="#f4f4f4" stroke="#999"/><path d="M2.5 5h5" stroke="#3050c0" stroke-width="1.2"/></svg>
<span class="a tr" style="left:143px;top:142px">安装螺栓</span>
<div class="a" style="left:123px;top:170px;width:20px;height:1px;background-image:linear-gradient(90deg,#888 50%,transparent 50%);background-size:2px 1px"></div>
<svg class="a" style="left:142px;top:163px" width="14" height="14" viewBox="0 0 14 14"><rect x="0.5" y="0.5" width="12" height="12" fill="#fff" stroke="#2a5a8a"/><path d="M3 6.5l2.5 2.5 4.5-5.5" fill="none" stroke="#18a030" stroke-width="1.8"/></svg>
<svg class="a" style="left:156px;top:161px" width="18" height="16" viewBox="0 0 18 16"><circle cx="11.5" cy="5" r="4" fill="#fff" stroke="#222" stroke-width="1.2"/><text x="10" y="7.3" font-size="6" font-family="Liberation Sans" fill="#222">1</text><path d="M9 8l-4.5 5" stroke="#222"/><rect x="1.5" y="11.5" width="3" height="3" fill="#fff" stroke="#e02020"/></svg>
<span class="a tr" style="left:178px;top:162px">序号标注1</span>
<div class="a" style="left:123px;top:190px;width:20px;height:1px;background-image:linear-gradient(90deg,#888 50%,transparent 50%);background-size:2px 1px"></div>
<svg class="a" style="left:142px;top:183px" width="14" height="14" viewBox="0 0 14 14"><rect x="0.5" y="0.5" width="12" height="12" fill="#fff" stroke="#2a5a8a"/><path d="M3 6.5l2.5 2.5 4.5-5.5" fill="none" stroke="#18a030" stroke-width="1.8"/></svg>
<svg class="a" style="left:156px;top:181px" width="18" height="16" viewBox="0 0 18 16"><circle cx="11.5" cy="5" r="4" fill="#fff" stroke="#222" stroke-width="1.2"/><text x="10" y="7.3" font-size="6" font-family="Liberation Sans" fill="#222">1</text><path d="M9 8l-4.5 5" stroke="#222"/><rect x="1.5" y="11.5" width="3" height="3" fill="#fff" stroke="#e02020"/></svg>
<span class="a tr" style="left:178px;top:182px">序号标注2</span>
<div class="a" style="left:123px;top:210px;width:20px;height:1px;background-image:linear-gradient(90deg,#888 50%,transparent 50%);background-size:2px 1px"></div>
<svg class="a" style="left:142px;top:203px" width="14" height="14" viewBox="0 0 14 14"><rect x="0.5" y="0.5" width="12" height="12" fill="#fff" stroke="#2a5a8a"/><path d="M3 6.5l2.5 2.5 4.5-5.5" fill="none" stroke="#18a030" stroke-width="1.8"/></svg>
<svg class="a" style="left:156px;top:201px" width="16" height="16" viewBox="0 0 16 16"><text x="1" y="5.5" font-size="6" font-family="Liberation Mono" fill="#222">BOM</text><rect x="1.5" y="7.5" width="13" height="7" fill="#fff" stroke="#2a7a2a"/><path d="M6 7.5v7M10 7.5v7M1.5 11h4.5" stroke="#2a7a2a"/></svg>
<span class="a tr" style="left:178px;top:202px">BOM表格3</span>
<div class="a" style="left:93px;top:230px;width:14px;height:1px;background-image:linear-gradient(90deg,#888 50%,transparent 50%);background-size:2px 1px"></div>
<svg class="a" style="left:122px;top:221px" width="18" height="18" viewBox="0 0 18 18"><path d="M1 1.5L6 7" stroke="#b8b8b8" stroke-width="1"/><path d="M1 16.5L11.5 5" stroke="#6a6a7a" stroke-width="1.3"/><path d="M8.5 2.5c2-1.2 4-1 5.5 0.5l2.5 2.5-1.5 1.5-2-1.5-2 1z" fill="#f4f4f4" stroke="#666" stroke-width="0.9"/><path d="M7.5 7.5L16 16" stroke="#e01818" stroke-width="3" stroke-linecap="round"/></svg>
<span class="a tr" style="left:143px;top:222px">电动拧紧套筒扳手26</span>
<div class="a" style="left:93px;top:250px;width:14px;height:1px;background-image:linear-gradient(90deg,#888 50%,transparent 50%);background-size:2px 1px"></div>
<svg class="a" style="left:121px;top:241px" width="18" height="16" viewBox="0 0 18 16"><rect x="0.5" y="1.5" width="10" height="9" fill="#f4f080" stroke="#a89a20"/><rect x="2.5" y="3.5" width="5" height="5" fill="#b8e070"/><rect x="9.5" y="8.5" width="7" height="7" fill="#80e080" stroke="#20a020"/><rect x="11.5" y="10.5" width="3" height="3" fill="#e0ffe0"/><path d="M11 1.5l5 5M16.5 3v4h-4" fill="none" stroke="#a01818" stroke-width="1.6"/></svg>
<span class="a tr" style="left:143px;top:242px">安装电机</span>
<div class="a" style="left:93px;top:270px;width:14px;height:1px;background-image:linear-gradient(90deg,#888 50%,transparent 50%);background-size:2px 1px"></div>
<svg class="a" style="left:121px;top:261px" width="18" height="16" viewBox="0 0 18 16"><rect x="0.5" y="1.5" width="10" height="9" fill="#f4f080" stroke="#a89a20"/><rect x="2.5" y="3.5" width="5" height="5" fill="#b8e070"/><rect x="9.5" y="8.5" width="7" height="7" fill="#80e080" stroke="#20a020"/><rect x="11.5" y="10.5" width="3" height="3" fill="#e0ffe0"/><path d="M11 1.5l5 5M16.5 3v4h-4" fill="none" stroke="#a01818" stroke-width="1.6"/><rect x="-0.5" y="9" width="5" height="5" fill="#1010f0"/></svg>
<span class="a tr" style="left:143px;top:262px">安装螺栓1</span>
<div class="a" style="left:93px;top:290px;width:14px;height:1px;background-image:linear-gradient(90deg,#888 50%,transparent 50%);background-size:2px 1px"></div>
<svg class="a" style="left:121px;top:281px" width="18" height="16" viewBox="0 0 18 16"><rect x="0.5" y="1.5" width="10" height="9" fill="#f4f080" stroke="#a89a20"/><rect x="2.5" y="3.5" width="5" height="5" fill="#b8e070"/><rect x="9.5" y="8.5" width="7" height="7" fill="#80e080" stroke="#20a020"/><rect x="11.5" y="10.5" width="3" height="3" fill="#e0ffe0"/><path d="M11 1.5l5 5M16.5 3v4h-4" fill="none" stroke="#a01818" stroke-width="1.6"/></svg>
<span class="a tr" style="left:143px;top:282px">安装螺栓4</span>
<div class="a" style="left:93px;top:310px;width:14px;height:1px;background-image:linear-gradient(90deg,#888 50%,transparent 50%);background-size:2px 1px"></div>
<svg class="a" style="left:121px;top:301px" width="18" height="16" viewBox="0 0 18 16"><rect x="0.5" y="1.5" width="10" height="9" fill="#f4f080" stroke="#a89a20"/><rect x="2.5" y="3.5" width="5" height="5" fill="#b8e070"/><rect x="9.5" y="8.5" width="7" height="7" fill="#80e080" stroke="#20a020"/><rect x="11.5" y="10.5" width="3" height="3" fill="#e0ffe0"/><path d="M11 1.5l5 5M16.5 3v4h-4" fill="none" stroke="#a01818" stroke-width="1.6"/></svg>
<span class="a tr" style="left:143px;top:302px">安装螺栓2</span>
<div class="a" style="left:93px;top:330px;width:14px;height:1px;background-image:linear-gradient(90deg,#888 50%,transparent 50%);background-size:2px 1px"></div>
<svg class="a" style="left:121px;top:321px" width="18" height="16" viewBox="0 0 18 16"><rect x="0.5" y="1.5" width="10" height="9" fill="#f4f080" stroke="#a89a20"/><rect x="2.5" y="3.5" width="5" height="5" fill="#b8e070"/><rect x="9.5" y="8.5" width="7" height="7" fill="#80e080" stroke="#20a020"/><rect x="11.5" y="10.5" width="3" height="3" fill="#e0ffe0"/><path d="M11 1.5l5 5M16.5 3v4h-4" fill="none" stroke="#a01818" stroke-width="1.6"/></svg>
<span class="a tr" style="left:143px;top:322px">安装螺栓3</span>
<div class="a" style="left:93px;top:350px;width:14px;height:1px;background-image:linear-gradient(90deg,#888 50%,transparent 50%);background-size:2px 1px"></div>
<svg class="a" style="left:121px;top:341px" width="18" height="16" viewBox="0 0 18 16"><rect x="0.5" y="1.5" width="10" height="9" fill="#f4f080" stroke="#a89a20"/><rect x="2.5" y="3.5" width="5" height="5" fill="#b8e070"/><rect x="9.5" y="8.5" width="7" height="7" fill="#80e080" stroke="#20a020"/><rect x="11.5" y="10.5" width="3" height="3" fill="#e0ffe0"/><path d="M11 1.5l5 5M16.5 3v4h-4" fill="none" stroke="#a01818" stroke-width="1.6"/></svg>
<span class="a tr" style="left:143px;top:342px">安装螺栓5</span>
<div class="a" style="left:93px;top:370px;width:14px;height:1px;background-image:linear-gradient(90deg,#888 50%,transparent 50%);background-size:2px 1px"></div>
<svg class="a" style="left:121px;top:361px" width="18" height="16" viewBox="0 0 18 16"><rect x="0.5" y="1.5" width="10" height="9" fill="#f4f080" stroke="#a89a20"/><rect x="2.5" y="3.5" width="5" height="5" fill="#b8e070"/><rect x="9.5" y="8.5" width="7" height="7" fill="#80e080" stroke="#20a020"/><rect x="11.5" y="10.5" width="3" height="3" fill="#e0ffe0"/><path d="M11 1.5l5 5M16.5 3v4h-4" fill="none" stroke="#a01818" stroke-width="1.6"/></svg>
<span class="a tr" style="left:143px;top:362px">安装螺栓6</span>
<div class="a" style="left:93px;top:390px;width:14px;height:1px;background-image:linear-gradient(90deg,#888 50%,transparent 50%);background-size:2px 1px"></div>
<svg class="a" style="left:121px;top:381px" width="18" height="16" viewBox="0 0 18 16"><rect x="0.5" y="1.5" width="10" height="9" fill="#f4f080" stroke="#a89a20"/><rect x="2.5" y="3.5" width="5" height="5" fill="#b8e070"/><rect x="9.5" y="8.5" width="7" height="7" fill="#80e080" stroke="#20a020"/><rect x="11.5" y="10.5" width="3" height="3" fill="#e0ffe0"/><path d="M11 1.5l5 5M16.5 3v4h-4" fill="none" stroke="#a01818" stroke-width="1.6"/></svg>
<span class="a tr" style="left:143px;top:382px">安装螺栓7</span>
<div class="a" style="left:93px;top:410px;width:14px;height:1px;background-image:linear-gradient(90deg,#888 50%,transparent 50%);background-size:2px 1px"></div>
<svg class="a" style="left:121px;top:401px" width="18" height="16" viewBox="0 0 18 16"><rect x="0.5" y="1.5" width="10" height="9" fill="#f4f080" stroke="#a89a20"/><rect x="2.5" y="3.5" width="5" height="5" fill="#b8e070"/><rect x="9.5" y="8.5" width="7" height="7" fill="#80e080" stroke="#20a020"/><rect x="11.5" y="10.5" width="3" height="3" fill="#e0ffe0"/><path d="M11 1.5l5 5M16.5 3v4h-4" fill="none" stroke="#a01818" stroke-width="1.6"/></svg>
<span class="a tr" style="left:143px;top:402px">安装螺栓8</span>
<div class="a" style="left:93px;top:430px;width:14px;height:1px;background-image:linear-gradient(90deg,#888 50%,transparent 50%);background-size:2px 1px"></div>
<svg class="a" style="left:122px;top:421px" width="18" height="18" viewBox="0 0 18 18"><path d="M1 1.5L6 7" stroke="#b8b8b8" stroke-width="1"/><path d="M1 16.5L11.5 5" stroke="#6a6a7a" stroke-width="1.3"/><path d="M8.5 2.5c2-1.2 4-1 5.5 0.5l2.5 2.5-1.5 1.5-2-1.5-2 1z" fill="#f4f4f4" stroke="#666" stroke-width="0.9"/><path d="M7.5 7.5L16 16" stroke="#e01818" stroke-width="3" stroke-linecap="round"/></svg>
<span class="a tr" style="left:143px;top:422px">扳手活动16</span>
<div class="a" style="left:93px;top:450px;width:14px;height:1px;background-image:linear-gradient(90deg,#888 50%,transparent 50%);background-size:2px 1px"></div>
<svg class="a" style="left:122px;top:441px" width="18" height="18" viewBox="0 0 18 18"><path d="M1 1.5L6 7" stroke="#b8b8b8" stroke-width="1"/><path d="M1 16.5L11.5 5" stroke="#6a6a7a" stroke-width="1.3"/><path d="M8.5 2.5c2-1.2 4-1 5.5 0.5l2.5 2.5-1.5 1.5-2-1.5-2 1z" fill="#f4f4f4" stroke="#666" stroke-width="0.9"/><path d="M7.5 7.5L16 16" stroke="#e01818" stroke-width="3" stroke-linecap="round"/></svg>
<span class="a tr" style="left:143px;top:442px">扳手活动15</span>
<div class="a" style="left:93px;top:470px;width:14px;height:1px;background-image:linear-gradient(90deg,#888 50%,transparent 50%);background-size:2px 1px"></div>
<svg class="a" style="left:122px;top:461px" width="18" height="18" viewBox="0 0 18 18"><path d="M1 1.5L6 7" stroke="#b8b8b8" stroke-width="1"/><path d="M1 16.5L11.5 5" stroke="#6a6a7a" stroke-width="1.3"/><path d="M8.5 2.5c2-1.2 4-1 5.5 0.5l2.5 2.5-1.5 1.5-2-1.5-2 1z" fill="#f4f4f4" stroke="#666" stroke-width="0.9"/><path d="M7.5 7.5L16 16" stroke="#e01818" stroke-width="3" stroke-linecap="round"/></svg>
<span class="a tr" style="left:143px;top:462px">扳手活动14</span>
<div class="a" style="left:93px;top:490px;width:14px;height:1px;background-image:linear-gradient(90deg,#888 50%,transparent 50%);background-size:2px 1px"></div>
<svg class="a" style="left:122px;top:481px" width="18" height="18" viewBox="0 0 18 18"><path d="M1 1.5L6 7" stroke="#b8b8b8" stroke-width="1"/><path d="M1 16.5L11.5 5" stroke="#6a6a7a" stroke-width="1.3"/><path d="M8.5 2.5c2-1.2 4-1 5.5 0.5l2.5 2.5-1.5 1.5-2-1.5-2 1z" fill="#f4f4f4" stroke="#666" stroke-width="0.9"/><path d="M7.5 7.5L16 16" stroke="#e01818" stroke-width="3" stroke-linecap="round"/></svg>
<span class="a tr" style="left:143px;top:482px">扳手活动13</span>
<div class="a" style="left:93px;top:510px;width:14px;height:1px;background-image:linear-gradient(90deg,#888 50%,transparent 50%);background-size:2px 1px"></div>
<svg class="a" style="left:122px;top:501px" width="18" height="18" viewBox="0 0 18 18"><path d="M1 1.5L6 7" stroke="#b8b8b8" stroke-width="1"/><path d="M1 16.5L11.5 5" stroke="#6a6a7a" stroke-width="1.3"/><path d="M8.5 2.5c2-1.2 4-1 5.5 0.5l2.5 2.5-1.5 1.5-2-1.5-2 1z" fill="#f4f4f4" stroke="#666" stroke-width="0.9"/><path d="M7.5 7.5L16 16" stroke="#e01818" stroke-width="3" stroke-linecap="round"/></svg>
<span class="a tr" style="left:143px;top:502px">扳手活动12</span>
<div class="a" style="left:93px;top:530px;width:14px;height:1px;background-image:linear-gradient(90deg,#888 50%,transparent 50%);background-size:2px 1px"></div>
<svg class="a" style="left:122px;top:521px" width="18" height="18" viewBox="0 0 18 18"><path d="M1 1.5L6 7" stroke="#b8b8b8" stroke-width="1"/><path d="M1 16.5L11.5 5" stroke="#6a6a7a" stroke-width="1.3"/><path d="M8.5 2.5c2-1.2 4-1 5.5 0.5l2.5 2.5-1.5 1.5-2-1.5-2 1z" fill="#f4f4f4" stroke="#666" stroke-width="0.9"/><path d="M7.5 7.5L16 16" stroke="#e01818" stroke-width="3" stroke-linecap="round"/></svg>
<span class="a tr" style="left:143px;top:522px">扳手活动11</span>
<div class="a" style="left:93px;top:550px;width:14px;height:1px;background-image:linear-gradient(90deg,#888 50%,transparent 50%);background-size:2px 1px"></div>
<svg class="a" style="left:122px;top:541px" width="18" height="18" viewBox="0 0 18 18"><path d="M1 1.5L6 7" stroke="#b8b8b8" stroke-width="1"/><path d="M1 16.5L11.5 5" stroke="#6a6a7a" stroke-width="1.3"/><path d="M8.5 2.5c2-1.2 4-1 5.5 0.5l2.5 2.5-1.5 1.5-2-1.5-2 1z" fill="#f4f4f4" stroke="#666" stroke-width="0.9"/><path d="M7.5 7.5L16 16" stroke="#e01818" stroke-width="3" stroke-linecap="round"/></svg>
<span class="a tr" style="left:143px;top:542px">扳手活动10</span>
<div class="a" style="left:93px;top:570px;width:14px;height:1px;background-image:linear-gradient(90deg,#888 50%,transparent 50%);background-size:2px 1px"></div>
<svg class="a" style="left:122px;top:561px" width="18" height="18" viewBox="0 0 18 18"><path d="M1 1.5L6 7" stroke="#b8b8b8" stroke-width="1"/><path d="M1 16.5L11.5 5" stroke="#6a6a7a" stroke-width="1.3"/><path d="M8.5 2.5c2-1.2 4-1 5.5 0.5l2.5 2.5-1.5 1.5-2-1.5-2 1z" fill="#f4f4f4" stroke="#666" stroke-width="0.9"/><path d="M7.5 7.5L16 16" stroke="#e01818" stroke-width="3" stroke-linecap="round"/></svg>
<span class="a tr" style="left:143px;top:562px">扳手活动9</span>
<div class="a" style="left:93px;top:590px;width:14px;height:1px;background-image:linear-gradient(90deg,#888 50%,transparent 50%);background-size:2px 1px"></div>
<svg class="a" style="left:121px;top:581px" width="18" height="16" viewBox="0 0 18 16"><rect x="0.5" y="1.5" width="10" height="9" fill="#f4f080" stroke="#a89a20"/><rect x="2.5" y="3.5" width="5" height="5" fill="#b8e070"/><rect x="9.5" y="8.5" width="7" height="7" fill="#80e080" stroke="#20a020"/><rect x="11.5" y="10.5" width="3" height="3" fill="#e0ffe0"/><path d="M11 1.5l5 5M16.5 3v4h-4" fill="none" stroke="#a01818" stroke-width="1.6"/></svg>
<svg class="a" style="left:82px;top:585px" width="11" height="11" viewBox="0 0 11 11"><rect x="0.5" y="0.5" width="9" height="9" rx="1.5" fill="#f4f4f4" stroke="#999"/><path d="M2.5 5h5" stroke="#3050c0" stroke-width="1.2"/></svg>
<span class="a tr" style="left:143px;top:582px">安装螺栓和垫片</span>
<div class="a" style="left:123px;top:610px;width:20px;height:1px;background-image:linear-gradient(90deg,#888 50%,transparent 50%);background-size:2px 1px"></div>
<svg class="a" style="left:142px;top:603px" width="14" height="14" viewBox="0 0 14 14"><rect x="0.5" y="0.5" width="12" height="12" fill="#fff" stroke="#2a5a8a"/><path d="M3 6.5l2.5 2.5 4.5-5.5" fill="none" stroke="#18a030" stroke-width="1.8"/></svg>
<svg class="a" style="left:156px;top:601px" width="18" height="16" viewBox="0 0 18 16"><circle cx="11.5" cy="5" r="4" fill="#fff" stroke="#222" stroke-width="1.2"/><text x="10" y="7.3" font-size="6" font-family="Liberation Sans" fill="#222">1</text><path d="M9 8l-4.5 5" stroke="#222"/><rect x="1.5" y="11.5" width="3" height="3" fill="#fff" stroke="#e02020"/></svg>
<span class="a tr" style="left:178px;top:602px">序号标注1</span>
<div class="a" style="left:123px;top:630px;width:20px;height:1px;background-image:linear-gradient(90deg,#888 50%,transparent 50%);background-size:2px 1px"></div>
<svg class="a" style="left:142px;top:623px" width="14" height="14" viewBox="0 0 14 14"><rect x="0.5" y="0.5" width="12" height="12" fill="#fff" stroke="#2a5a8a"/><path d="M3 6.5l2.5 2.5 4.5-5.5" fill="none" stroke="#18a030" stroke-width="1.8"/></svg>
<svg class="a" style="left:156px;top:621px" width="18" height="16" viewBox="0 0 18 16"><circle cx="11.5" cy="5" r="4" fill="#fff" stroke="#222" stroke-width="1.2"/><text x="10" y="7.3" font-size="6" font-family="Liberation Sans" fill="#222">1</text><path d="M9 8l-4.5 5" stroke="#222"/><rect x="1.5" y="11.5" width="3" height="3" fill="#fff" stroke="#e02020"/></svg>
<span class="a tr" style="left:178px;top:622px">序号标注2</span>
<div class="a" style="left:123px;top:650px;width:20px;height:1px;background-image:linear-gradient(90deg,#888 50%,transparent 50%);background-size:2px 1px"></div>
<svg class="a" style="left:142px;top:643px" width="14" height="14" viewBox="0 0 14 14"><rect x="0.5" y="0.5" width="12" height="12" fill="#fff" stroke="#2a5a8a"/><path d="M3 6.5l2.5 2.5 4.5-5.5" fill="none" stroke="#18a030" stroke-width="1.8"/></svg>
<svg class="a" style="left:156px;top:641px" width="16" height="16" viewBox="0 0 16 16"><text x="1" y="5.5" font-size="6" font-family="Liberation Mono" fill="#222">BOM</text><rect x="1.5" y="7.5" width="13" height="7" fill="#fff" stroke="#2a7a2a"/><path d="M6 7.5v7M10 7.5v7M1.5 11h4.5" stroke="#2a7a2a"/></svg>
<span class="a tr" style="left:178px;top:642px">BOM表格3</span>
<div class="a" style="left:93px;top:670px;width:14px;height:1px;background-image:linear-gradient(90deg,#888 50%,transparent 50%);background-size:2px 1px"></div>
<svg class="a" style="left:121px;top:661px" width="18" height="16" viewBox="0 0 18 16"><rect x="0.5" y="1.5" width="10" height="9" fill="#f4f080" stroke="#a89a20"/><rect x="2.5" y="3.5" width="5" height="5" fill="#b8e070"/><rect x="9.5" y="8.5" width="7" height="7" fill="#80e080" stroke="#20a020"/><rect x="11.5" y="10.5" width="3" height="3" fill="#e0ffe0"/><path d="M11 1.5l5 5M16.5 3v4h-4" fill="none" stroke="#a01818" stroke-width="1.6"/></svg>
<svg class="a" style="left:82px;top:665px" width="11" height="11" viewBox="0 0 11 11"><rect x="0.5" y="0.5" width="9" height="9" rx="1.5" fill="#f4f4f4" stroke="#999"/><path d="M2.5 5h5" stroke="#3050c0" stroke-width="1.2"/></svg>
<span class="a tr" style="left:143px;top:662px">安装螺栓和垫片</span>
<div class="a" style="left:123px;top:690px;width:20px;height:1px;background-image:linear-gradient(90deg,#888 50%,transparent 50%);background-size:2px 1px"></div>
<svg class="a" style="left:142px;top:683px" width="14" height="14" viewBox="0 0 14 14"><rect x="0.5" y="0.5" width="12" height="12" fill="#fff" stroke="#2a5a8a"/><path d="M3 6.5l2.5 2.5 4.5-5.5" fill="none" stroke="#18a030" stroke-width="1.8"/></svg>
<svg class="a" style="left:156px;top:681px" width="18" height="16" viewBox="0 0 18 16"><circle cx="11.5" cy="5" r="4" fill="#fff" stroke="#222" stroke-width="1.2"/><text x="10" y="7.3" font-size="6" font-family="Liberation Sans" fill="#222">1</text><path d="M9 8l-4.5 5" stroke="#222"/><rect x="1.5" y="11.5" width="3" height="3" fill="#fff" stroke="#e02020"/></svg>
<span class="a tr" style="left:178px;top:682px">序号标注1</span>
<div class="a" style="left:123px;top:710px;width:20px;height:1px;background-image:linear-gradient(90deg,#888 50%,transparent 50%);background-size:2px 1px"></div>
<svg class="a" style="left:142px;top:703px" width="14" height="14" viewBox="0 0 14 14"><rect x="0.5" y="0.5" width="12" height="12" fill="#fff" stroke="#2a5a8a"/><path d="M3 6.5l2.5 2.5 4.5-5.5" fill="none" stroke="#18a030" stroke-width="1.8"/></svg>
<svg class="a" style="left:156px;top:701px" width="18" height="16" viewBox="0 0 18 16"><circle cx="11.5" cy="5" r="4" fill="#fff" stroke="#222" stroke-width="1.2"/><text x="10" y="7.3" font-size="6" font-family="Liberation Sans" fill="#222">1</text><path d="M9 8l-4.5 5" stroke="#222"/><rect x="1.5" y="11.5" width="3" height="3" fill="#fff" stroke="#e02020"/></svg>
<span class="a tr" style="left:178px;top:702px">序号标注2</span>
<div class="a" style="left:123px;top:730px;width:20px;height:1px;background-image:linear-gradient(90deg,#888 50%,transparent 50%);background-size:2px 1px"></div>
<svg class="a" style="left:142px;top:723px" width="14" height="14" viewBox="0 0 14 14"><rect x="0.5" y="0.5" width="12" height="12" fill="#fff" stroke="#2a5a8a"/><path d="M3 6.5l2.5 2.5 4.5-5.5" fill="none" stroke="#18a030" stroke-width="1.8"/></svg>
<svg class="a" style="left:156px;top:721px" width="16" height="16" viewBox="0 0 16 16"><text x="1" y="5.5" font-size="6" font-family="Liberation Mono" fill="#222">BOM</text><rect x="1.5" y="7.5" width="13" height="7" fill="#fff" stroke="#2a7a2a"/><path d="M6 7.5v7M10 7.5v7M1.5 11h4.5" stroke="#2a7a2a"/></svg>
<span class="a tr" style="left:178px;top:722px">BOM表格3</span>
<div class="a" style="left:93px;top:750px;width:14px;height:1px;background-image:linear-gradient(90deg,#888 50%,transparent 50%);background-size:2px 1px"></div>
<svg class="a" style="left:121px;top:741px" width="18" height="16" viewBox="0 0 18 16"><rect x="0.5" y="1.5" width="10" height="9" fill="#f4f080" stroke="#a89a20"/><rect x="2.5" y="3.5" width="5" height="5" fill="#b8e070"/><rect x="9.5" y="8.5" width="7" height="7" fill="#80e080" stroke="#20a020"/><rect x="11.5" y="10.5" width="3" height="3" fill="#e0ffe0"/><path d="M11 1.5l5 5M16.5 3v4h-4" fill="none" stroke="#a01818" stroke-width="1.6"/></svg>
<svg class="a" style="left:82px;top:745px" width="11" height="11" viewBox="0 0 11 11"><rect x="0.5" y="0.5" width="9" height="9" rx="1.5" fill="#f4f4f4" stroke="#999"/><path d="M2.5 5h5" stroke="#3050c0" stroke-width="1.2"/></svg>
<span class="a tr" style="left:143px;top:742px">安装螺栓和垫片</span>
<div class="a" style="left:123px;top:770px;width:20px;height:1px;background-image:linear-gradient(90deg,#888 50%,transparent 50%);background-size:2px 1px"></div>
<svg class="a" style="left:142px;top:763px" width="14" height="14" viewBox="0 0 14 14"><rect x="0.5" y="0.5" width="12" height="12" fill="#fff" stroke="#2a5a8a"/><path d="M3 6.5l2.5 2.5 4.5-5.5" fill="none" stroke="#18a030" stroke-width="1.8"/></svg>
<svg class="a" style="left:156px;top:761px" width="18" height="16" viewBox="0 0 18 16"><circle cx="11.5" cy="5" r="4" fill="#fff" stroke="#222" stroke-width="1.2"/><text x="10" y="7.3" font-size="6" font-family="Liberation Sans" fill="#222">1</text><path d="M9 8l-4.5 5" stroke="#222"/><rect x="1.5" y="11.5" width="3" height="3" fill="#fff" stroke="#e02020"/></svg>
<span class="a tr" style="left:178px;top:762px">序号标注1</span>
<div class="a" style="left:122px;top:38px;width:1px;height:72px;background-image:linear-gradient(#888 50%,transparent 50%);background-size:1px 2px"></div>
<div class="a" style="left:122px;top:158px;width:1px;height:52px;background-image:linear-gradient(#888 50%,transparent 50%);background-size:1px 2px"></div>
<div class="a" style="left:122px;top:598px;width:1px;height:52px;background-image:linear-gradient(#888 50%,transparent 50%);background-size:1px 2px"></div>
<div class="a" style="left:122px;top:678px;width:1px;height:52px;background-image:linear-gradient(#888 50%,transparent 50%);background-size:1px 2px"></div>
<div class="a" style="left:122px;top:758px;width:1px;height:22px;background-image:linear-gradient(#888 50%,transparent 50%);background-size:1px 2px"></div>
<div class="a" style="left:122px;top:0px;width:1px;height:10px;background-image:linear-gradient(#888 50%,transparent 50%);background-size:1px 2px"></div>
<div class="a" style="left:256px;top:0;width:17px;height:776px;background:#f0f0f0"></div>
<svg class="a" style="left:258px;top:4px" width="12" height="10" viewBox="0 0 12 10"><path d="M2 7l4-4 4 4" fill="none" stroke="#555" stroke-width="1.6"/></svg>
<svg class="a" style="left:258px;top:763px" width="12" height="10" viewBox="0 0 12 10"><path d="M2 3l4 4 4-4" fill="none" stroke="#555" stroke-width="1.6"/></svg>
<div class="a" style="left:257px;top:552px;width:14px;height:77px;background:#cdcdcd"></div>
<div class="a" style="left:0;top:776px;width:273px;height:17px;background:#f0f0f0"></div>
<div class="a" style="left:45px;top:777px;width:193px;height:14px;background:#cdcdcd"></div>
<svg class="a" style="left:4px;top:779px" width="10" height="12" viewBox="0 0 10 12"><path d="M7 2l-4 4 4 4" fill="none" stroke="#555" stroke-width="1.6"/></svg>
<svg class="a" style="left:242px;top:779px" width="10" height="12" viewBox="0 0 10 12"><path d="M3 2l4 4-4 4" fill="none" stroke="#555" stroke-width="1.6"/></svg>
</div>
<div class="a" style="left:0;top:855px;width:289px;height:23px;background:#f0f0f0"></div>
<div class="a" style="left:0;top:854px;width:43px;height:2px;background:#111"></div>
<div class="a" style="left:97px;top:854px;width:191px;height:2px;background:#111"></div>
<div class="a" style="left:43px;top:855px;width:56px;height:23px;background:#f8f8f8;border-right:2px solid #111;border-bottom:2px solid #111"></div>
<span class="a" style="left:8px;top:858px;font-size:13px;line-height:15px;color:#999">属性</span>
<span class="a" style="left:49px;top:858px;font-size:13px;line-height:15px;color:#111">工作区</span>
</div>
<!-- VIEWPORT -->
<div id="vp" class="a">
<svg class="a" style="left:-2px;top:-2px" width="1629" height="879" viewBox="293 196 1629 879">
<defs>
<linearGradient id="mfan" x1="0" y1="0" x2="0" y2="1"><stop offset="0" stop-color="#dcdcdc"/><stop offset="0.4" stop-color="#fafafa"/><stop offset="1" stop-color="#e6e6e6"/></linearGradient>
<linearGradient id="cas" x1="0" y1="0" x2="1" y2="0"><stop offset="0" stop-color="#3a3a3a"/><stop offset="0.5" stop-color="#5a5a5a"/><stop offset="1" stop-color="#2e2e2e"/></linearGradient>
<linearGradient id="bell" x1="0" y1="0" x2="1" y2="1"><stop offset="0" stop-color="#f4f4f4"/><stop offset="0.5" stop-color="#c8c8c8"/><stop offset="1" stop-color="#f0f0f0"/></linearGradient>
<linearGradient id="pil" x1="0" y1="0" x2="1" y2="0"><stop offset="0" stop-color="#c8c8c8"/><stop offset="0.35" stop-color="#fafafa"/><stop offset="1" stop-color="#9a9a9a"/></linearGradient>
<linearGradient id="shaft" x1="0" y1="0" x2="0" y2="1"><stop offset="0" stop-color="#cfcfcf"/><stop offset="0.3" stop-color="#f2f2f2"/><stop offset="1" stop-color="#a8a8a8"/></linearGradient>
</defs>
<!-- baseplate -->
<path d="M303 634L668 483L1714 696L1328 854Z" fill="#48484a"/>
<path d="M303 634L1328 854L1328 903L303 684Z" fill="#c2c1c6" stroke="#222" stroke-width="1"/>
<path d="M303 638L1328 858" stroke="#f4f4f6" stroke-width="1.5"/>
<path d="M1328 854L1714 696L1714 743L1328 903Z" fill="#2b2b2d" stroke="#111" stroke-width="1"/>
<path d="M303 634L668 483L1714 696" fill="none" stroke="#1a1a1a" stroke-width="1"/>
<!-- cutouts front -->
<path d="M585 711L646 724L646 756L585 743Z" fill="#2e2e30" stroke="#111"/>
<path d="M585 743L646 724" stroke="#777"/>
<path d="M987 798L1047 811L1047 843L987 830Z" fill="#2e2e30" stroke="#111"/>
<path d="M987 830L1047 811" stroke="#777"/>
<ellipse cx="338" cy="662" rx="9" ry="5.5" fill="#2a2a2a" stroke="#111" transform="rotate(12 338 662)"/>
<ellipse cx="1294" cy="868" rx="9" ry="5.5" fill="#fff" stroke="#111" transform="rotate(12 1294 868)"/>
<!-- top seam lines -->
<path d="M497 554L1519 774" stroke="#1a1a1a" stroke-width="1.5"/><path d="M497 556L1519 776" stroke="#9a9a9c" stroke-width="1"/>
<path d="M902 713L1242 783" stroke="#1c1c1c" stroke-width="6" stroke-linecap="round"/><path d="M902 713L980 729" stroke="#c0c0c8" stroke-width="4" stroke-linecap="round"/><path d="M980 729L1242 783" stroke="#8a8a90" stroke-width="2" stroke-linecap="round"/>
<path d="M938 697L1278 769" stroke="#1c1c1c" stroke-width="6" stroke-linecap="round"/><path d="M938 697L1012 713" stroke="#c0c0c8" stroke-width="4" stroke-linecap="round"/><path d="M1012 713L1278 769" stroke="#8a8a90" stroke-width="2" stroke-linecap="round"/>
<!-- plate dots -->
<g fill="#2a2a2a" stroke="#7a7a7a" stroke-width="0.6">
<ellipse cx="1366" cy="643" rx="2.2" ry="1.5"/>
<ellipse cx="1432" cy="648" rx="2.2" ry="1.5"/>
<ellipse cx="1321" cy="661" rx="2.2" ry="1.5"/>
<ellipse cx="1438" cy="667" rx="2.2" ry="1.5"/>
<ellipse cx="1377" cy="670" rx="2.2" ry="1.5"/>
<ellipse cx="1519" cy="668" rx="2.2" ry="1.5"/>
<ellipse cx="1537" cy="670" rx="2.2" ry="1.5"/>
<ellipse cx="1569" cy="666" rx="2.2" ry="1.5"/>
<ellipse cx="1399" cy="684" rx="2.2" ry="1.5"/>
<ellipse cx="1526" cy="679" rx="2.2" ry="1.5"/>
<ellipse cx="1438" cy="702" rx="2.2" ry="1.5"/>
<ellipse cx="1464" cy="705" rx="2.2" ry="1.5"/>
<ellipse cx="1668" cy="696" rx="2.2" ry="1.5"/>
<ellipse cx="1675" cy="689" rx="2.2" ry="1.5"/>
<ellipse cx="1341" cy="725" rx="2.2" ry="1.5"/>
<ellipse cx="1361" cy="734" rx="2.2" ry="1.5"/>
<ellipse cx="1382" cy="751" rx="2.2" ry="1.5"/>
<ellipse cx="1301" cy="761" rx="2.2" ry="1.5"/>
<ellipse cx="1458" cy="768" rx="2.2" ry="1.5"/>
<ellipse cx="1509" cy="765" rx="2.2" ry="1.5"/>
<ellipse cx="1522" cy="760" rx="2.2" ry="1.5"/>
<ellipse cx="1476" cy="779" rx="2.2" ry="1.5"/>
<ellipse cx="1489" cy="774" rx="2.2" ry="1.5"/>
<ellipse cx="1202" cy="803" rx="2.2" ry="1.5"/>
<ellipse cx="1301" cy="845" rx="2.2" ry="1.5"/>
<ellipse cx="1114" cy="574" rx="2.2" ry="1.5"/>
<ellipse cx="1130" cy="577" rx="2.2" ry="1.5"/>
<ellipse cx="1144" cy="615" rx="2.2" ry="1.5"/>
<ellipse cx="1119" cy="636" rx="2.2" ry="1.5"/>
<ellipse cx="1201" cy="649" rx="2.2" ry="1.5"/>
<ellipse cx="1229" cy="611" rx="2.2" ry="1.5"/>
<ellipse cx="1240" cy="619" rx="2.2" ry="1.5"/>
<ellipse cx="1264" cy="605" rx="2.2" ry="1.5"/>
<ellipse cx="1282" cy="608" rx="2.2" ry="1.5"/>
<ellipse cx="1365" cy="627" rx="2.2" ry="1.5"/>
<ellipse cx="1382" cy="630" rx="2.2" ry="1.5"/>
<ellipse cx="1398" cy="683" rx="2.2" ry="1.5"/>
<ellipse cx="1524" cy="678" rx="2.2" ry="1.5"/>
<ellipse cx="1567" cy="665" rx="2.2" ry="1.5"/>
<ellipse cx="1024" cy="781" rx="2.2" ry="1.5"/>
<ellipse cx="1201" cy="801" rx="2.2" ry="1.5"/>
<ellipse cx="1190" cy="822" rx="2.2" ry="1.5"/>
<ellipse cx="326" cy="629" rx="2.2" ry="1.5"/>
<ellipse cx="331" cy="637" rx="2.2" ry="1.5"/>
<ellipse cx="415" cy="592" rx="2.2" ry="1.5"/>
<ellipse cx="568" cy="545" rx="2.2" ry="1.5"/>
<ellipse cx="572" cy="550" rx="2.2" ry="1.5"/>
<ellipse cx="499" cy="673" rx="2.2" ry="1.5"/>
<ellipse cx="512" cy="676" rx="2.2" ry="1.5"/>
<ellipse cx="655" cy="702" rx="2.2" ry="1.5"/>
<ellipse cx="674" cy="706" rx="2.2" ry="1.5"/>
<ellipse cx="600" cy="568" rx="2.2" ry="1.5"/>
<ellipse cx="606" cy="575" rx="2.2" ry="1.5"/>
<ellipse cx="960" cy="750" rx="2.2" ry="1.5"/>
<ellipse cx="1000" cy="760" rx="2.2" ry="1.5"/>
<ellipse cx="880" cy="730" rx="2.2" ry="1.5"/>
<ellipse cx="1050" cy="700" rx="2.2" ry="1.5"/>
</g><g fill="#e8e8e8" stroke="#222" stroke-width="0.6">
<rect x="1038.5" y="540" width="3" height="8" rx="1.2"/>
<rect x="1122.5" y="559" width="3" height="8" rx="1.2"/>
<rect x="1288.5" y="594" width="3" height="8" rx="1.2"/>
<rect x="1373.5" y="612" width="3" height="8" rx="1.2"/>
<rect x="1538.5" y="647" width="3" height="8" rx="1.2"/>
<rect x="997.5" y="768" width="3" height="8" rx="1.2"/>
<rect x="1161.5" y="805" width="3" height="8" rx="1.2"/>
<rect x="344.5" y="630" width="3" height="8" rx="1.2"/>
<rect x="429.5" y="572" width="3" height="8" rx="1.2"/>
<rect x="481.5" y="659" width="3" height="8" rx="1.2"/>
<rect x="525.5" y="668" width="3" height="8" rx="1.2"/>
<rect x="661.5" y="697" width="3" height="8" rx="1.2"/>
<rect x="1477.5" y="779" width="3" height="8" rx="1.2"/>
</g>

<!-- motor ghost -->
<defs>
<clipPath id="stat"><path d="M880 365L1157 428A77 128 0 0 0 1157 684L870 625Z"/></clipPath>
<linearGradient id="gFan" x1="0" y1="0" x2="0.25" y2="1"><stop offset="0" stop-color="#a0a0a0" stop-opacity="0.3"/><stop offset="0.3" stop-color="#ffffff" stop-opacity="0"/><stop offset="1" stop-color="#a0a0a0" stop-opacity="0.05"/></linearGradient>
</defs>
<g id="motor">
<path d="M880 365L1157 428A77 128 0 0 0 1157 684L870 625Z" fill="#9c9c9c" fill-opacity="0.16"/>
<g clip-path="url(#stat)">
<path d="M900 356.0L1170 414.1M900 363.6L1170 421.7M900 371.2L1170 429.2M900 378.8L1170 436.9M900 386.4L1170 444.4M900 394.0L1170 452.1M900 401.6L1170 459.7M900 409.2L1170 467.2M900 416.8L1170 474.9M900 424.4L1170 482.4M900 432.0L1170 490.1M900 439.6L1170 497.7M900 447.2L1170 505.2M900 454.8L1170 512.9M900 462.4L1170 520.4M900 470.0L1170 528.0M900 477.6L1170 535.6M900 485.2L1170 543.2M900 492.8L1170 550.8M900 500.4L1170 558.4M900 508.0L1170 566.0M900 515.6L1170 573.6M900 523.2L1170 581.2M900 530.8L1170 588.8M900 538.4L1170 596.4M900 546.0L1170 604.0M900 553.6L1170 611.6M900 561.2L1170 619.2M900 568.8L1170 626.8M900 576.4L1170 634.4M900 584.0L1170 642.0M900 591.6L1170 649.6M900 599.2L1170 657.2M900 606.8L1170 664.8M900 614.4L1170 672.4M900 622.0L1170 680.0M900 629.6L1170 687.6M900 637.2L1170 695.2M900 644.8L1170 702.8M900 652.4L1170 710.4M900 660.0L1170 718.0M900 667.6L1170 725.6" stroke="#6a6a6a" stroke-opacity="0.7" stroke-width="1.5" fill="none"/>
<path d="M900 359.5L1170 417.6M900 367.1L1170 425.2M900 374.7L1170 432.8M900 382.3L1170 440.4M900 389.9L1170 447.9M900 397.5L1170 455.6M900 405.1L1170 463.2M900 412.7L1170 470.8M900 420.3L1170 478.4M900 427.9L1170 485.9M900 435.5L1170 493.6M900 443.1L1170 501.2M900 450.7L1170 508.8M900 458.3L1170 516.4M900 465.9L1170 523.9M900 473.5L1170 531.5M900 481.1L1170 539.1M900 488.7L1170 546.8M900 496.3L1170 554.3M900 503.9L1170 561.9M900 511.5L1170 569.5M900 519.1L1170 577.1M900 526.7L1170 584.8M900 534.3L1170 592.3M900 541.9L1170 599.9M900 549.5L1170 607.5M900 557.1L1170 615.1M900 564.7L1170 622.8M900 572.3L1170 630.3M900 579.9L1170 637.9M900 587.5L1170 645.5M900 595.1L1170 653.1M900 602.7L1170 660.8M900 610.3L1170 668.3M900 617.9L1170 675.9M900 625.5L1170 683.5M900 633.1L1170 691.1M900 640.7L1170 698.8M900 648.3L1170 706.3M900 655.9L1170 713.9M900 663.5L1170 721.5M900 671.1L1170 729.1" stroke="#ffffff" stroke-opacity="0.25" stroke-width="1.2" fill="none"/>
</g>
<path d="M880 365L1157 428" fill="none" stroke="#a8a8a8"/>
<path d="M1022 394L1034 382L1150 406L1150 423L1138 423L1022 400Z" fill="#e2e2e2" fill-opacity="0.75" stroke="#b4b4b4"/>
<path d="M1034 382L1034 390L1138 412L1150 406M1138 412L1138 423" fill="none" stroke="#b4b4b4"/>
<path d="M990 392L996 380M1014 392L1010 380M1064 410L1070 398M1088 410L1084 398" stroke="#d0d0d0" stroke-width="3"/>
<ellipse cx="1002" cy="372" rx="19" ry="20" fill="none" stroke="#f2f2f2" stroke-width="5"/>
<ellipse cx="1002" cy="372" rx="21.5" ry="22.5" fill="none" stroke="#b8b8b8" stroke-width="1"/>
<ellipse cx="1002" cy="372" rx="16.5" ry="17.5" fill="none" stroke="#b8b8b8" stroke-width="1"/>
<ellipse cx="1077" cy="390" rx="20" ry="22" fill="none" stroke="#f2f2f2" stroke-width="5"/>
<ellipse cx="1077" cy="390" rx="22.5" ry="24.5" fill="none" stroke="#b8b8b8" stroke-width="1"/>
<ellipse cx="1077" cy="390" rx="17.5" ry="19.5" fill="none" stroke="#b8b8b8" stroke-width="1"/>
<path d="M1157 428L1318 461A77 128 0 0 1 1318 717L1157 684A77 128 0 0 1 1157 428Z" fill="url(#gFan)"/>
<path d="M1157 428L1318 461A77 128 0 0 1 1318 717L1157 684A77 128 0 0 1 1157 428Z" fill="#909090" fill-opacity="0.08"/>
<ellipse cx="1318" cy="589" rx="77" ry="128" fill="#686868" fill-opacity="0.22" stroke="#8c8c8c" stroke-width="1"/>
<ellipse cx="1328" cy="592" rx="61" ry="101" fill="none" stroke="#8c8c8c" stroke-width="1"/>
<path d="M1157 428L1325 461M1157 684L1318 717" fill="none" stroke="#a0a0a0"/>
<path d="M1157 428A77 128 0 0 0 1157 684" fill="none" stroke="#a8a8a8"/>
</g>

<!-- PUMP -->
<defs>
<linearGradient id="gBand" x1="0" y1="0" x2="1" y2="0.3"><stop offset="0" stop-color="#505050"/><stop offset="0.5" stop-color="#a4a4a4"/><stop offset="1" stop-color="#5a5a5a"/></linearGradient>
<linearGradient id="gBand2" x1="0" y1="0" x2="0" y2="1"><stop offset="0" stop-color="#6a6a6a"/><stop offset="0.55" stop-color="#a8a8a8"/><stop offset="1" stop-color="#707070"/></linearGradient>
<linearGradient id="gHole" x1="0" y1="0" x2="1" y2="0"><stop offset="0" stop-color="#262626"/><stop offset="0.45" stop-color="#404040"/><stop offset="0.75" stop-color="#b8b8b8"/><stop offset="1" stop-color="#404040"/></linearGradient>
<linearGradient id="gBack" x1="0" y1="0" x2="1" y2="0"><stop offset="0" stop-color="#8a8a8a"/><stop offset="0.6" stop-color="#4a4a4a"/><stop offset="1" stop-color="#262626"/></linearGradient>
<linearGradient id="gRim" x1="0" y1="0" x2="0" y2="1"><stop offset="0" stop-color="#9c9c9c"/><stop offset="0.45" stop-color="#e8e8e8"/><stop offset="1" stop-color="#fafafa"/></linearGradient>
<linearGradient id="gCone" x1="0" y1="1" x2="1" y2="0"><stop offset="0" stop-color="#ffffff"/><stop offset="0.35" stop-color="#e8e8e8"/><stop offset="0.6" stop-color="#a4a4a4"/><stop offset="0.85" stop-color="#5a5a5a"/><stop offset="1" stop-color="#2e2e2e"/></linearGradient>
<linearGradient id="gShaft" x1="0" y1="0" x2="0" y2="1"><stop offset="0" stop-color="#c4c4c4"/><stop offset="0.3" stop-color="#f0f0f0"/><stop offset="0.7" stop-color="#d4d4d4"/><stop offset="1" stop-color="#9a9a9a"/></linearGradient>
<linearGradient id="gPipe" x1="0" y1="0" x2="0" y2="1"><stop offset="0" stop-color="#f4f4f4"/><stop offset="0.5" stop-color="#d0d0d0"/><stop offset="1" stop-color="#8a8a8a"/></linearGradient>
<linearGradient id="gInner" x1="0" y1="0" x2="1" y2="0"><stop offset="0" stop-color="#bcbcbc"/><stop offset="0.4" stop-color="#f4f4f4"/><stop offset="1" stop-color="#d8d8d8"/></linearGradient>
<clipPath id="ringIn"><ellipse cx="866" cy="494" rx="70" ry="125" transform="rotate(7 866 494)"/></clipPath><clipPath id="ringR"><path d="M925 360C885 430 862 520 872 650L1000 700L1000 300Z"/></clipPath>
</defs>
<!-- casing silhouette -->
<path d="M479 229L490 226L512 215L525 213.5L581 215L595 223.5L608 232L612 241L626 260L660 268L678 280L700 273L717 271L754 278L776 292L791 314L797 335L800 352L850 372L850 600L760 612L700 600L650 530L615 478L584 477L576 478L553 474L538 460L524 440L511 430L499 430L486 422L476 424L463 420L448 399L434 370L420 356L407 353L407 334L418 334L420 318L437 297L450 287L461 269L479 243Z" fill="#363636" stroke="#111" stroke-width="1"/>
<!-- neck -->
<defs><linearGradient id="gBoss" x1="0" y1="0" x2="1" y2="0"><stop offset="0" stop-color="#3a3a3a"/><stop offset="0.45" stop-color="#d8d8d8"/><stop offset="1" stop-color="#4a4a4a"/></linearGradient></defs>
<path d="M480 236L610 238L614 262L560 274L520 274L478 262Z" fill="#3a3a3a" stroke="#111"/>
<rect x="479" y="234" width="9" height="28" fill="url(#gBoss)" stroke="#111" stroke-width="0.8"/>
<rect x="503" y="244" width="10" height="30" fill="url(#gBoss)" stroke="#111" stroke-width="0.8"/>
<path d="M521 250L555 250L555 266L521 268Z" fill="#b0b0b0" stroke="#111" stroke-width="0.8"/>
<rect x="555" y="248" width="8" height="26" fill="url(#gBoss)" stroke="#111" stroke-width="0.8"/>
<rect x="591" y="243" width="9" height="26" fill="url(#gBoss)" stroke="#111" stroke-width="0.8"/>
<path d="M600 250L612 246L618 262L606 268Z" fill="#505050" stroke="#111" stroke-width="0.8"/>
<!-- end cover -->
<defs>
<linearGradient id="gFace" x1="0" y1="0" x2="0" y2="1"><stop offset="0" stop-color="#3e3e3e"/><stop offset="0.65" stop-color="#b0b0b0"/><stop offset="1" stop-color="#8a8a8a"/></linearGradient>
<linearGradient id="gFace2" x1="0" y1="0" x2="0" y2="1"><stop offset="0" stop-color="#484848"/><stop offset="0.6" stop-color="#c0c0c0"/><stop offset="1" stop-color="#909090"/></linearGradient>
<linearGradient id="gCov" x1="0" y1="0" x2="1" y2="0"><stop offset="0" stop-color="#3a3a3a"/><stop offset="0.5" stop-color="#8a8a8a"/><stop offset="1" stop-color="#5a5a5a"/></linearGradient>
</defs>
<path d="M444 295C432 302 421 318 418 335L418 360C421 370 430 377 442 378L442 353L446 322L460 286Z" fill="url(#gCov)" stroke="#111"/>
<path d="M430 315L444 318M424 345L442 348" stroke="#222"/>
<!-- face between rib1 and rib2 -->
<path d="M489 251L506 271L488 309L477 335L473 364L472 378L451 368L451 349L455 318L469 287Z" fill="url(#gFace)" stroke="#111" stroke-width="0.8"/>
<path d="M462 330L476 334M455 350L473 352" stroke="#333" stroke-width="0.8"/>
<!-- face between rib2 and rib3 -->
<path d="M509 276L546 256L528 295L513 328L506 359L504 386L479 375L480 364L484 335L495 309Z" fill="url(#gFace2)" stroke="#111" stroke-width="0.8"/>
<path d="M490 335L514 340M484 362L506 366" stroke="#333" stroke-width="0.8"/>
<!-- face right of rib3 -->
<path d="M551 262L600 268L580 300L560 330L545 360L530 392L511 382L513 359L520 328L535 295Z" fill="#6c6c6c" stroke="#111" stroke-width="0.8"/>
<path d="M560 300L578 292L585 310L565 320Z" fill="#b8b8b8"/>
<path d="M528 370L546 345M535 380L560 340" stroke="#d8d8d8" stroke-width="1.5"/>
<!-- ribs (dark bands) -->
<path d="M486 244L460 286L446 322L442 353L442 375L451 368L451 349L455 318L469 287L489 251Z" fill="#1e1e1e" stroke="#111"/>
<path d="M506 271L488 309L477 335L473 364L472 378L479 375L480 364L484 335L495 309L509 276Z" fill="#1e1e1e" stroke="#111"/>
<path d="M546 256L528 295L513 328L506 359L504 386L511 382L513 359L520 328L535 295L551 262Z" fill="#1e1e1e" stroke="#111"/>
<path d="M490 253L471 288L457 319L453 350L453 366M511 278L497 310L486 336L482 364M553 264L537 296L522 329L515 360L513 380" fill="none" stroke="#e0e0e0" stroke-width="1"/>
<!-- seam & lower lobes -->
<path d="M436 372L515 390L612 410" fill="none" stroke="#d8d8d8" stroke-width="2.5"/>
<path d="M436 376L515 394L612 414" fill="none" stroke="#111" stroke-width="1"/>
<path d="M437 377C440 395 448 410 460 418C468 423 478 423 483 418L472 382Z" fill="#262626" stroke="#111"/>
<path d="M450 382C452 398 458 408 468 413L474 410C466 404 462 394 462 384Z" fill="#5e5e5e"/>
<path d="M473 383C476 405 485 422 497 429C505 433 514 433 518 428L506 390Z" fill="#262626" stroke="#111"/>
<path d="M486 388C488 404 494 416 505 422L510 419C502 412 498 402 498 391Z" fill="#5e5e5e"/>
<path d="M406 335L424 331L432 336L432 352L414 356L406 352Z" fill="#505050" stroke="#111"/>
<path d="M406 335L424 331L432 336L414 340Z" fill="#9a9a9a"/>
<!-- inlet flange -->
<path d="M479 229L490 226L512 215L525 213.5L581 215L595 223.5L608 232L608 241C590 252 505 254 487 240Z" fill="#2c2c2c" stroke="#111"/>
<path d="M487 240C505 254 590 252 608 241L607 251C585 260 505 260 489 250Z" fill="#1e1e1e"/>
<ellipse cx="544" cy="231" rx="43" ry="12.5" fill="url(#gHole)" stroke="#111"/>
<!-- middle section base -->
<path d="M600 262L660 268L678 280L656 300L621 373L614 422L621 471L610 466L591 453L576 478L553 474L538 460L524 440L517 405L519 376L542 338L582 290Z" fill="#404040"/>
<!-- drum 1 -->
<path d="M576 292L620 298L588 338L578 382L582 424L591 453L566 462L549 433L540 386L551 338Z" fill="url(#gBand2)"/>
<path d="M545 338L590 345M541 386L580 392M548 433L586 440" stroke="#2a2a2a" stroke-width="1"/>
<path d="M540 398L612 410L612 418L540 406Z" fill="#1a1a1a"/>
<!-- big flange: light rim + black face -->
<path d="M600 270C570 290 545 330 530 365C518 395 516 420 522 443C528 460 545 473 572 478L576 470C550 462 536 450 533 440C528 420 530 395 540 365C553 330 575 295 606 276Z" fill="#8c8c8c" stroke="#111"/>
<path d="M606 276C575 295 553 330 540 365C530 395 528 420 533 440C536 450 550 462 576 470L584 466C566 462 552 450 549 433C542 410 541 386 551 338C560 305 576 290 620 285Z" fill="#1e1e1e" stroke="#111"/>
<circle cx="541.5" cy="368" r="3" fill="#555" stroke="#111"/><circle cx="536" cy="414" r="3" fill="#555" stroke="#111"/><circle cx="543" cy="449" r="3" fill="#555" stroke="#111"/><circle cx="560" cy="468" r="3" fill="#555" stroke="#111"/><circle cx="553" cy="336" r="3" fill="#555" stroke="#111"/><circle cx="576" cy="305" r="3" fill="#555" stroke="#111"/>
<!-- ring 2 -->
<path d="M622 296C600 310 588 335 580 382C578 410 584 440 600 460L612 466C598 445 590 420 592 382C596 340 610 315 632 302Z" fill="#1c1c1c" stroke="#111"/>
<path d="M632 302L650 300L656 300C640 320 626 350 621 373C616 400 615 430 621 471L612 466C598 445 592 420 594 382C598 345 612 318 632 302Z" fill="#7a7a7a"/>
<!-- top frame -->
<path d="M570 280L660 268L678 280L650 300L600 318L570 300Z" fill="#2e2e2e" stroke="#111"/>
<path d="M583 293L622 301L622 313L583 309Z" fill="#a8a8a8" stroke="#111" stroke-width="0.8"/>
<path d="M610 281L648 289L648 298L610 295Z" fill="#b0b0b0" stroke="#111" stroke-width="0.8"/>
<path d="M636 270L675 278L675 287L636 286Z" fill="#a8a8a8" stroke="#111" stroke-width="0.8"/>
<path d="M583 309L622 313L622 330L583 326Z" fill="#8a8a8a" stroke="#111" stroke-width="0.8"/>
<path d="M624 300L648 298L655 310L624 318Z" fill="#9a9a9a" stroke="#111" stroke-width="0.8"/>
<!-- bell housing back (dark top-right) -->
<path d="M678 280L700 273L717 271L754 278L776 292L791 314L797 335L800 352L760 350L730 318L700 298Z" fill="url(#gBack)" stroke="#111"/>
<!-- bell front rim -->
<path d="M656 296C632 322 614 368 614 420C614 470 636 512 668 540L700 548C670 515 650 470 650 420C650 372 664 330 690 300Z" fill="url(#gRim)" stroke="#111"/>
<path d="M662 300C642 326 626 370 626 420C626 468 646 508 676 536" fill="none" stroke="#222" stroke-width="1"/>
<!-- cone -->
<path d="M690 300C712 288 745 292 770 312L797 340L800 352L740 352C726 420 732 510 768 565L700 548C670 515 650 470 650 420C650 372 664 330 690 300Z" fill="url(#gCone)" stroke="#111"/>
<path d="M650 420C690 425 720 432 735 440M658 470L740 485" fill="none" stroke="#333" stroke-width="1"/>
<!-- shaft housing -->
<path d="M740 352L836 368L850 372L850 590L768 565C732 510 726 420 740 352Z" fill="url(#gShaft)" stroke="#111"/>
<ellipse cx="756" cy="422" rx="8" ry="9" fill="#2a2a2a" stroke="#111"/>
<path d="M752 420l5 5-3 2z" fill="#ccc"/>
<!-- cage -->
<path d="M724 312L844 352L842 362L722 322Z" fill="#e2e2e2" stroke="#1a1a1a"/>
<rect x="746" y="318" width="11" height="30" fill="#e8e8e8" stroke="#1a1a1a"/>
<rect x="760" y="320" width="12" height="31" fill="#dcdcdc" stroke="#1a1a1a"/>
<ellipse cx="751.5" cy="318" rx="5.5" ry="2.5" fill="#f4f4f4" stroke="#1a1a1a"/>
<ellipse cx="766" cy="320" rx="6" ry="2.5" fill="#f4f4f4" stroke="#1a1a1a"/>
<path d="M660 374Q700 368 748 376Q700 380 660 374Z" fill="#f2f2f2" stroke="#222"/>
<path d="M656 394L690 432L676 440Z" fill="#2a2a2a" stroke="#111"/><path d="M676 440L716 488" stroke="#e0e0e0" stroke-width="2"/>
<path d="M644 428L792 460L790 470L642 438Z" fill="#e6e6e6" stroke="#1a1a1a"/>
<path d="M642 438L790 470L788 478L642 444Z" fill="#3a3a3a"/>
<path d="M686 494L805 522L803 531L684 503Z" fill="#e6e6e6" stroke="#1a1a1a"/>
<path d="M686 551L830 584L828 593L684 560Z" fill="#e6e6e6" stroke="#1a1a1a"/>
<path d="M684 560L828 593L826 600L684 566Z" fill="#3a3a3a"/>
<path d="M688 500L770 458M700 540L780 605" fill="none" stroke="#e0e0e0" stroke-width="2"/>
<path d="M752 332C700 380 678 460 688 520C692 550 700 570 712 582" fill="none" stroke="#1a1a1a" stroke-width="7"/>
<path d="M752 332C700 380 678 460 688 520C692 550 700 570 712 582" fill="none" stroke="#e6e6e6" stroke-width="4"/>
<!-- flange ghost -->
<ellipse cx="876" cy="490" rx="84" ry="162" fill="#c8c8c8" fill-opacity="0.3" stroke="#a8a8a8" transform="rotate(9 876 490)"/>
<!-- ring interior -->
<g clip-path="url(#ringIn)">
<rect x="780" y="360" width="170" height="270" fill="url(#gInner)"/>
<path d="M800 380L880 392L860 470L830 430Z" fill="#c4c4c4" fill-opacity="0.6"/>
<g fill="#f4f4f4" stroke="#c8c8c8" stroke-width="0.8"><circle cx="906.0" cy="386.5" r="4.6"/><circle cx="906.0" cy="396.1" r="4.6"/><circle cx="888.6" cy="405.7" r="4.6"/><circle cx="878.7" cy="415.3" r="4.6"/><circle cx="872.2" cy="424.9" r="4.6"/><circle cx="867.1" cy="434.5" r="4.6"/><circle cx="863.1" cy="444.1" r="4.6"/><circle cx="859.8" cy="453.7" r="4.6"/><circle cx="857.2" cy="463.3" r="4.6"/><circle cx="855.0" cy="472.9" r="4.6"/><circle cx="853.3" cy="482.5" r="4.6"/><circle cx="851.9" cy="492.1" r="4.6"/><circle cx="850.9" cy="501.7" r="4.6"/><circle cx="850.3" cy="511.3" r="4.6"/><circle cx="850.0" cy="520.9" r="4.6"/><circle cx="850.1" cy="530.5" r="4.6"/><circle cx="850.4" cy="540.1" r="4.6"/><circle cx="851.1" cy="549.7" r="4.6"/><circle cx="852.2" cy="559.3" r="4.6"/><circle cx="853.7" cy="568.9" r="4.6"/><circle cx="855.5" cy="578.5" r="4.6"/><circle cx="857.8" cy="588.1" r="4.6"/><circle cx="860.6" cy="597.7" r="4.6"/><circle cx="864.0" cy="607.3" r="4.6"/><circle cx="868.3" cy="616.9" r="4.6"/><circle cx="873.6" cy="626.5" r="4.6"/><circle cx="880.8" cy="636.1" r="4.6"/></g>
<path d="['M905.0 382.0L950 387.9', 'M905.0 391.6L950 397.5', 'M887.6 401.2L950 409.3', 'M877.7 410.8L950 420.2', 'M871.2 420.4L950 430.6', 'M866.1 430.0L950 440.9', 'M862.1 439.6L950 451.0', 'M858.8 449.2L950 461.0', 'M856.2 458.8L950 471.0', 'M854.0 468.4L950 480.9', 'M852.3 478.0L950 490.7', 'M850.9 487.6L950 500.5', 'M849.9 497.2L950 510.2', 'M849.3 506.8L950 519.9', 'M849.0 516.4L950 529.5', 'M849.1 526.0L950 539.1', 'M849.4 535.6L950 548.7', 'M850.1 545.2L950 558.2', 'M851.2 554.8L950 567.6', 'M852.7 564.4L950 577.1', 'M854.5 574.0L950 586.4', 'M856.8 583.6L950 595.7', 'M859.6 593.2L950 605.0', 'M863.0 602.8L950 614.1', 'M867.3 612.4L950 623.2', 'M872.6 622.0L950 632.1', 'M879.8 631.6L950 640.7']" stroke="#7a7a7a" stroke-width="1.5" fill="none"/>
<path d="M907.0 386.0L950 391.9M907.0 395.6L950 401.5M889.6 405.2L950 413.3M879.7 414.8L950 424.2M873.2 424.4L950 434.6M868.1 434.0L950 444.9M864.1 443.6L950 455.0M860.8 453.2L950 465.0M858.2 462.8L950 475.0M856.0 472.4L950 484.9M854.3 482.0L950 494.7M852.9 491.6L950 504.5M851.9 501.2L950 514.2M851.3 510.8L950 523.9M851.0 520.4L950 533.5M851.1 530.0L950 543.1M851.4 539.6L950 552.7M852.1 549.2L950 562.2M853.2 558.8L950 571.6M854.7 568.4L950 581.1M856.5 578.0L950 590.4M858.8 587.6L950 599.7M861.6 597.2L950 609.0M865.0 606.8L950 618.1M869.3 616.4L950 627.2M874.6 626.0L950 636.1M881.8 635.6L950 644.7" stroke="#ffffff" stroke-width="1" fill="none"/>
<path d="M852 400C835 450 830 540 845 610" fill="none" stroke="#aaa" stroke-width="1"/>
<path d="M829 404L913 407M812 439L920 441M815 498L913 520M807 581L846 596" fill="none" stroke="#2a2a2a" stroke-width="2.5"/>
<circle cx="800" cy="477" r="27" fill="#2a2a2a" stroke="#555" stroke-width="3" stroke-dasharray="2 2"/>
<circle cx="802" cy="477" r="10" fill="#6a6a6a" stroke="#111"/>
<path d="M795 512L840 514C848 520 846 540 835 548L800 556L793 540Z" fill="#d8d8d8" fill-opacity="0.75" stroke="#333"/>
<ellipse cx="812" cy="536" rx="10" ry="8" fill="#777" stroke="#222"/>
</g>
<!-- flange ring -->
<path fill-rule="evenodd" fill="#29292b" stroke="#111" d="M955.82 504.89A91 148 7 1 1 775.18 482.71A91 148 7 1 1 955.82 504.89ZM935.48 502.53A70 125 7 1 1 796.52 485.47A70 125 7 1 1 935.48 502.53Z"/>
<ellipse cx="865.5" cy="493.8" rx="88" ry="145" fill="none" stroke="#a8a8a8" stroke-width="2" transform="rotate(7 865.5 493.8)"/>
<ellipse cx="866" cy="494" rx="73" ry="128" fill="none" stroke="#5a5a5a" stroke-width="1.5" transform="rotate(7 866 494)"/>
<g clip-path="url(#ringR)"><path fill-rule="evenodd" fill="#c8c8c8" fill-opacity="0.1" d="M955.82 504.89A91 148 7 1 1 775.18 482.71A91 148 7 1 1 955.82 504.89ZM935.48 502.53A70 125 7 1 1 796.52 485.47A70 125 7 1 1 935.48 502.53Z"/></g>
<g fill="#d8d8d8" stroke="#111" stroke-width="1">
<path d="M898 353h12v7l-2 4h-8l-2-4z"/><path d="M837 379h12v7l-2 4h-8l-2-4z"/><path d="M943 407h12v7l-2 4h-8l-2-4z"/><path d="M795 468h12v7l-2 4h-8l-2-4z"/><path d="M943 507h12v7l-2 4h-8l-2-4z"/><path d="M793 570h12v7l-2 4h-8l-2-4z"/><path d="M900 598h12v7l-2 4h-8l-2-4z"/><path d="M838 622h12v7l-2 4h-8l-2-4z"/>
</g>
<!-- suction pipe -->
<defs><linearGradient id="gPipe2" x1="0" y1="0" x2="0.3" y2="1"><stop offset="0" stop-color="#f6f6f6"/><stop offset="0.55" stop-color="#d8d8d8"/><stop offset="1" stop-color="#8a8a8a"/></linearGradient></defs>
<path d="M585 484L600 476L615 462L640 470L652 500L650 522L633 521L581 537Z" fill="url(#gPipe2)" stroke="#111"/>
<path d="M600 476C615 490 625 505 633 521M612 466C630 480 640 495 648 512" fill="none" stroke="#333" stroke-width="0.8"/>
<path d="M590 510L632 500" stroke="#555" stroke-width="0.8"/>
<ellipse cx="573" cy="511" rx="12" ry="27" fill="#e6e6e6" stroke="#111" transform="rotate(6 573 511)"/>
<path d="M565 487C559 500 559 522 566 536M569 485C563 500 563 522 570 537M573 485C567 500 567 522 574 537" fill="none" stroke="#333" stroke-width="0.9"/>
<rect x="600" y="535" width="7" height="13" fill="#ddd" stroke="#222"/>
<ellipse cx="591" cy="542" rx="4" ry="3" fill="#aaa" stroke="#222"/>
<!-- left foot -->
<path d="M620 598L694 596L705 600L705 611L690 617L620 610Z" fill="#a8a8aa" stroke="#1a1a1a"/>
<path d="M620 606L690 612L705 606L705 611L690 617L620 610Z" fill="#f4f4f4" stroke="#1a1a1a" stroke-width="0.8"/>
<path d="M636 586L700 588L700 602L636 600Z" fill="#e8e8e8" stroke="#1a1a1a"/>
<path d="M640 590Q668 597 698 592M640 594Q668 601 698 596M642 598Q668 604 696 600" fill="none" stroke="#333" stroke-width="0.8"/>
<rect x="624" y="585" width="10" height="17" fill="url(#pil)" stroke="#222"/>
<path d="M652 478L684 483L684 565L652 562Z" fill="#cfcfcf" stroke="#111"/>
<path d="M652 520L684 524L684 563L652 562Z" fill="#dedede" stroke="#111"/>
<path d="M620 574L639 480L652 480L652 565Z" fill="#3a3a3c" stroke="#111"/>
<path d="M620 574L639 480L684 483" fill="none" stroke="#e8e8e8" stroke-width="1.6"/>
<path d="M615 581L652 563L684 566L684 583L616 586Z" fill="#6a6a6c" stroke="#111"/>
<path d="M616 581L684 583L684 589L616 587Z" fill="#f0f0f0" stroke="#1a1a1a" stroke-width="0.8"/>
<ellipse cx="668" cy="573" rx="6" ry="3.5" fill="#ddd" stroke="#222"/>
<circle cx="630" cy="575" r="2" fill="#ddd" stroke="#222"/>
<rect x="646.5" y="613" width="40" height="64" fill="url(#pil)" stroke="#1a1a1a"/>
<path d="M633 676L646 670L687 670L703 676L703 684L687 691L633 686Z" fill="#a8a8aa" stroke="#1a1a1a"/>
<rect x="646.5" y="660" width="40" height="17" fill="url(#pil)"/>
<path d="M633 682L687 687L703 680L703 684L687 691L633 686Z" fill="#f4f4f4" stroke="#1a1a1a" stroke-width="0.8"/>
<circle cx="637" cy="676" r="2" fill="#ddd" stroke="#222"/><circle cx="698" cy="677" r="2" fill="#ddd" stroke="#222"/>
<!-- right foot -->
<rect x="773" y="588" width="26" height="38" fill="url(#pil)" stroke="#1a1a1a"/>
<path d="M758 622L798 616L815 624L815 632L798 640L758 630Z" fill="#f4f4f4" stroke="#1a1a1a"/>
<!-- cables -->
<path d="M722 566C712 590 705 620 706 655C707 675 712 690 722 688" fill="none" stroke="#1a1a1a" stroke-width="5"/>
<path d="M727 587C726 620 724 640 724 662" fill="none" stroke="#1a1a1a" stroke-width="5"/>
<ellipse cx="723" cy="680" rx="7" ry="6" fill="none" stroke="#222" stroke-width="1.5"/>
<!-- motor foot bracket -->
<path d="M1032 728L1100 716L1128 738L1060 750Z" fill="#444" stroke="#1a1a1a"/>
<ellipse cx="1076" cy="733" rx="26" ry="9" fill="#e8e8e8" stroke="#222"/>
<ellipse cx="1076" cy="729" rx="20" ry="6" fill="#f4f4f4" stroke="#444"/>
<path d="M1062 672L1142 686C1146 687 1146 690 1144 692L1142 712L1096 704L1094 690L1062 684Z" fill="#e6e6e2" stroke="#1a1a1a"/>
<path d="M1064 676L1140 690" stroke="#fff" stroke-width="1.5"/>
<path d="M1012 690C1012 686 1014 684 1018 684L1092 697C1096 698 1097 700 1096 704L1094 724C1094 727 1092 728 1088 727L1016 714C1013 713 1012 711 1012 708Z" fill="#f2f2ee" stroke="#1a1a1a"/>
<path d="M1014 698L1094 712" stroke="#888" stroke-width="1"/>
<path d="M1094 704L1142 712L1140 722L1094 724Z" fill="#5a5a5a" stroke="#1a1a1a"/>
<rect x="1090" y="720" width="10" height="28" fill="url(#pil)" stroke="#1a1a1a"/>
<g fill="#c8b878" stroke="#333" stroke-width="0.8"><rect x="1032" y="666" width="4" height="16"/><rect x="1069" y="648" width="4" height="16"/><rect x="1122" y="656" width="4" height="16"/><rect x="1084" y="686" width="4" height="10"/></g>
<g fill="#b8a868" stroke="#333" stroke-width="0.8"><ellipse cx="1034" cy="665" rx="4" ry="2.5"/><ellipse cx="1071" cy="647" rx="4" ry="2.5"/><ellipse cx="1124" cy="655" rx="4" ry="2.5"/><ellipse cx="1086" cy="685" rx="4" ry="2.5"/></g>
<path d="M1064 656L1072 650L1068 660Z M1060 670L1072 664L1066 672Z" fill="#111"/>


<!-- balloons -->
<path d="M787 879L1066 660M953 898L1070 652" stroke="#111" stroke-width="1.2"/>
<circle cx="768.5" cy="893.5" r="23" fill="#fff" stroke="#222" stroke-width="1.2"/>
<circle cx="942.5" cy="919.5" r="23" fill="#fff" stroke="#222" stroke-width="1.2"/>
<text x="759" y="900" font-family="Liberation Mono" font-size="17" fill="#111">20</text>
<text x="933" y="926" font-family="Liberation Mono" font-size="17" fill="#111">18</text>
<rect x="1158.7" y="1006.5" width="756.5" height="30.700000000000045" fill="#c0c0c0"/>
<path d="M1158.7 1006.5H1915.2" stroke="#111" stroke-width="2"/>
<path d="M1158.7 1037.2H1915.2" stroke="#111" stroke-width="2"/>
<path d="M1228.6 975.4V1068.7" stroke="#111" stroke-width="1.6"/>
<path d="M1390.7 975.4V1068.7" stroke="#111" stroke-width="1.6"/>
<path d="M1542.2 975.4V1068.7" stroke="#111" stroke-width="1.6"/>
<path d="M1704.3 975.4V1068.7" stroke="#111" stroke-width="1.6"/>
<path d="M1774.2 975.4V1068.7" stroke="#111" stroke-width="1.6"/>
<path d="M1844.4 975.4V1068.7" stroke="#111" stroke-width="1.6"/>
<rect x="1158.7" y="975.4" width="756.5" height="93.30000000000007" fill="none" stroke="#111" stroke-width="3"/>
<text x="1168.7" y="996.6" font-family="Liberation Sans" font-size="18" fill="#111">序号</text>
<text x="1238.6" y="996.6" font-family="Liberation Sans" font-size="18" fill="#111">代号</text>
<text x="1400.7" y="996.6" font-family="Liberation Sans" font-size="18" fill="#111">名称</text>
<text x="1552.2" y="996.6" font-family="Liberation Sans" font-size="18" fill="#111">材料</text>
<text x="1714.3" y="996.6" font-family="Liberation Sans" font-size="18" fill="#111">单重</text>
<text x="1784.2" y="996.6" font-family="Liberation Sans" font-size="18" fill="#111">特性</text>
<text x="1854.4" y="996.6" font-family="Liberation Sans" font-size="18" fill="#111">数量</text>
<text x="1168.7" y="1026.6" font-family="Liberation Mono" font-size="16.6" fill="#111" xml:space="preserve">18</text>
<text x="1238.6" y="1026.6" font-family="Liberation Mono" font-size="16.6" fill="#111" xml:space="preserve">0301235800-M1</text>
<text x="1400.7" y="1026.6" font-family="Liberation Mono" font-size="16.6" fill="#111" xml:space="preserve">WASHER PLAIN</text>
<text x="1552.2" y="1026.6" font-family="Liberation Mono" font-size="16.6" fill="#111" xml:space="preserve">See Standards</text>
<text x="1714.3" y="1026.6" font-family="Liberation Mono" font-size="16.6" fill="#111" xml:space="preserve">0</text>
<text x="1784.2" y="1026.6" font-family="Liberation Mono" font-size="16.6" fill="#111" xml:space="preserve">C</text>
<text x="1854.4" y="1026.6" font-family="Liberation Mono" font-size="16.6" fill="#111" xml:space="preserve">1</text>
<text x="1168.7" y="1057.3" font-family="Liberation Mono" font-size="16.6" fill="#111" xml:space="preserve">20</text>
<text x="1238.6" y="1057.3" font-family="Liberation Mono" font-size="16.6" fill="#111" xml:space="preserve">0147 1404 03</text>
<text x="1400.7" y="1057.3" font-family="Liberation Mono" font-size="16.6" fill="#111" xml:space="preserve">BOLT</text>
<text x="1552.2" y="1057.3" font-family="Liberation Mono" font-size="16.6" fill="#111" xml:space="preserve">Steel 8.8</text>
<text x="1714.3" y="1057.3" font-family="Liberation Mono" font-size="16.6" fill="#111" xml:space="preserve">0</text>
<text x="1784.2" y="1057.3" font-family="Liberation Mono" font-size="16.6" fill="#111" xml:space="preserve">C</text>
<text x="1854.4" y="1057.3" font-family="Liberation Mono" font-size="16.6" fill="#111" xml:space="preserve">1</text>
<path d="M354.5 983L354.5 1011" stroke="#c81818" stroke-width="5"/>
<path d="M356 988L377 1012L357 1010Z" fill="#a8a8a8"/>
<path d="M358 996L378 1008L360 1010Z" fill="#2a9a2a" fill-opacity="0.7"/>
<path d="M357 987C368 994 375 1003 378 1012" fill="none" stroke="#30e030" stroke-width="1.5"/>
<path d="M357 985C365 990 368 996 370 1000" fill="none" stroke="#1a1a9a" stroke-width="2"/>
<path d="M377 1006C381 1008 383 1012 383 1015" fill="none" stroke="#d02020" stroke-width="1.5"/>
<path d="M355 1011L379 1018" stroke="#1818e0" stroke-width="5"/>
<circle cx="354.5" cy="982" r="5" fill="#d81c1c"/>
<circle cx="379" cy="1017" r="5" fill="#1c1ce8"/>
<circle cx="375" cy="1003" r="3" fill="#1a7a1a"/>
<text x="351" y="972" font-family="Liberation Sans" font-size="12" fill="#ff1010">Z</text>
<text x="378" y="1001" font-family="Liberation Sans" font-size="12" fill="#10e010">Y</text>
<text x="386" y="1019" font-family="Liberation Sans" font-size="12" fill="#1010ff">X</text>
<path d="M336 1049C333 1052 331 1057 331 1062" fill="none" stroke="#e08a3a" stroke-width="1"/>
<text x="324" y="1065" font-family="Liberation Sans" font-size="18" font-weight="bold" font-style="italic" fill="#3a3a8a" letter-spacing="-1.5">KM</text>
<text x="352" y="1065" font-family="Liberation Sans" font-size="12" font-weight="bold" font-style="italic" fill="#4a4a90">Soft</text>
</svg>
</div>
<!-- STATUS -->
<div id="status" class="a"><span class="a" style="left:9px;top:5px;font-size:13px;color:#222">就绪</span></div>
</body></html>
